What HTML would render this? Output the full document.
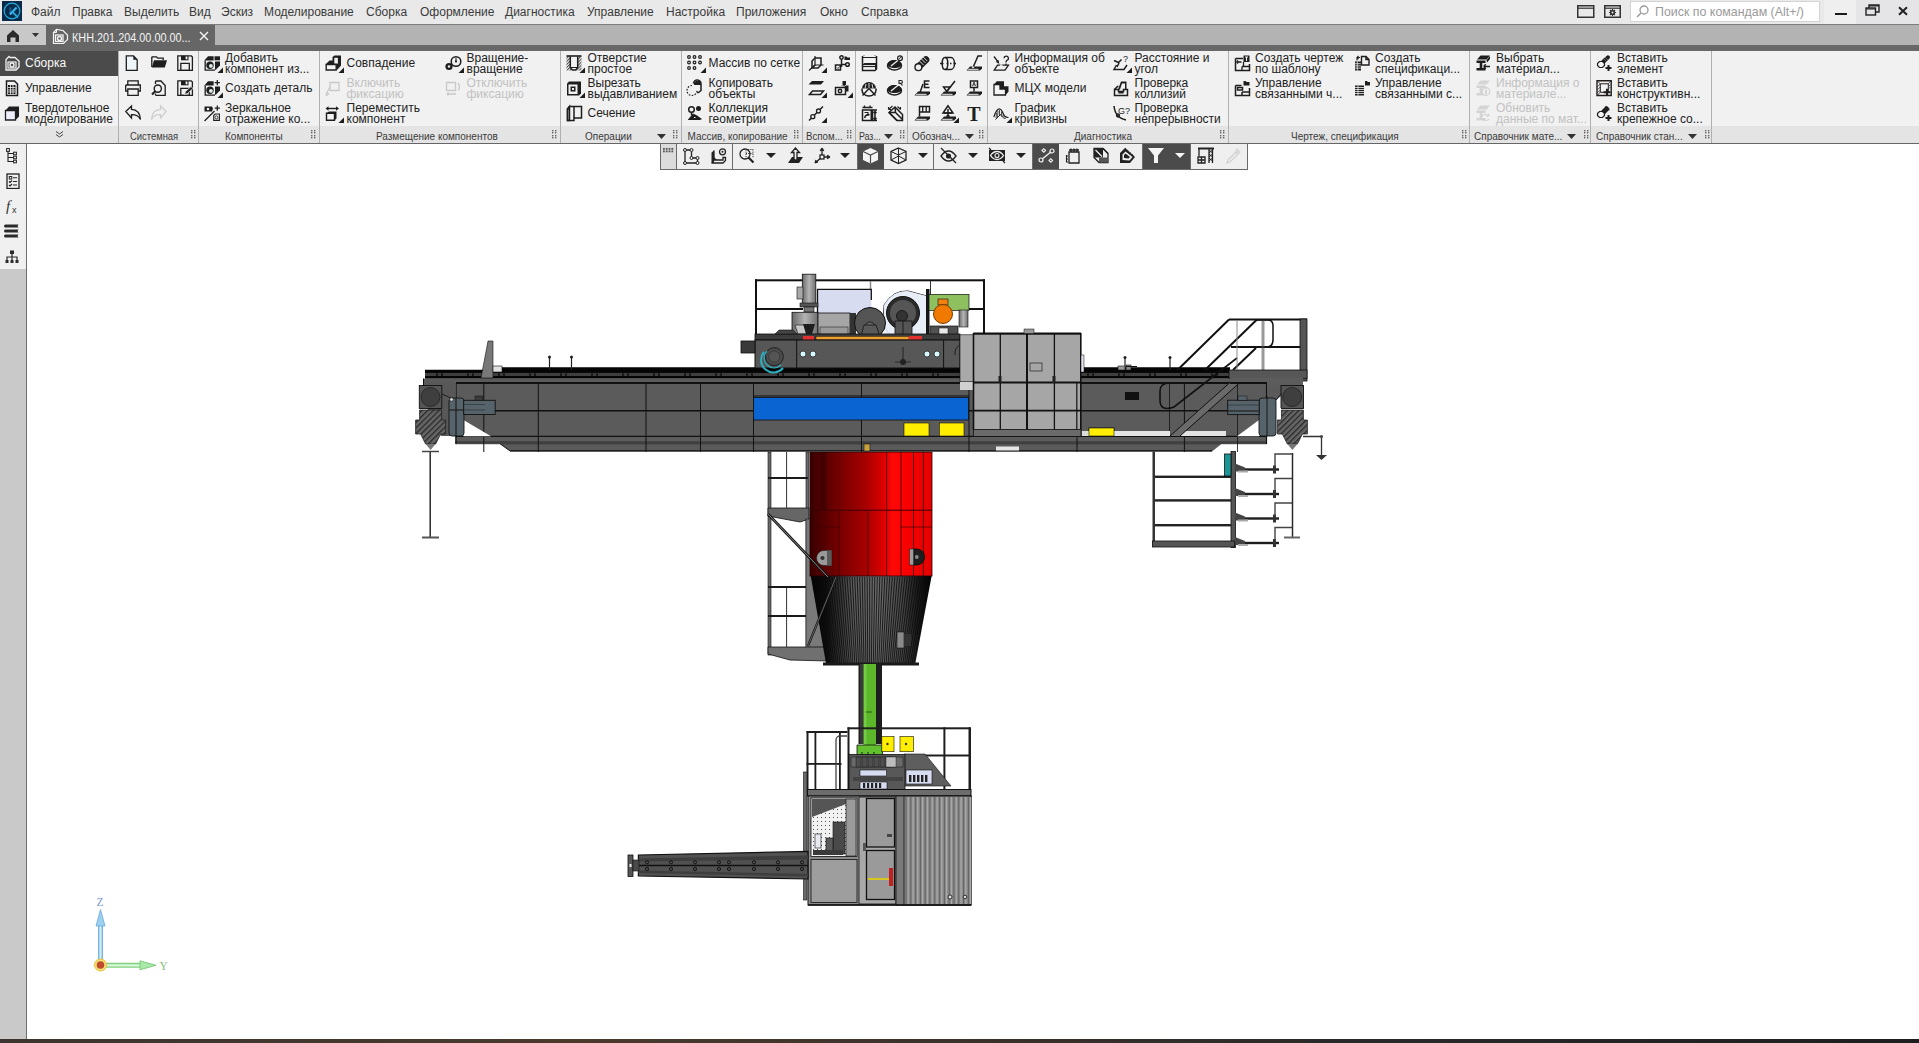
<!DOCTYPE html>
<html><head><meta charset="utf-8"><title>KOMPAS</title>
<style>
*{box-sizing:border-box}
html,body{margin:0;padding:0;width:1919px;height:1043px;overflow:hidden;background:#fff;font-family:"Liberation Sans",sans-serif}
#root{position:relative;width:1919px;height:1043px;overflow:hidden}
.a{position:absolute}
.t{position:absolute;white-space:nowrap;line-height:1}
#menubar{left:0;top:0;width:1919px;height:24px;background:#e9e9e9}
#menubar .m{position:absolute;top:5px;font-size:12px;color:#3a3a3a}
#tabstrip{left:0;top:24px;width:1919px;height:27px;background:#686868;border-top:1px solid #7c7c7c}
#ribbon{left:0;top:51px;width:1919px;height:93px;background:#f1f1f1;border-bottom:1px solid #666}
#labelrow{left:0;top:75px;width:1919px;height:17px;background:#e4e4e4}
.div{position:absolute;top:0;width:1px;height:92px;background:#b0b0b0}
.lbl{position:absolute;top:80.9px;font-size:10px;color:#3a3a3a;line-height:1;white-space:nowrap;transform-origin:0 0}
.it{position:absolute;font-size:12px;color:#222;line-height:11px;white-space:nowrap}
.dis{color:#c2c2c2}
#side{left:0;top:144px;width:26px;height:895px;background:#c9c9c9}
#sidetop{left:0;top:0;width:26px;height:125px;background:#f0f0f0}
#sideborder{left:26px;top:144px;width:1px;height:895px;background:#6e6e6e}
#taskbar{left:0;top:1039px;width:1919px;height:4px;background:linear-gradient(90deg,#3a3530,#4a3a2c 30%,#2a2a2a 70%,#1e1e1e)}

</style></head><body>
<div id="root">
<div id="menubar" class="a">
<svg class="a" style="left:2px;top:1px" width="21" height="20" viewBox="0 0 21 20"><rect x="0" y="0" width="20" height="20" fill="#0a2c4a"/><circle cx="10" cy="10" r="7.8" fill="none" stroke="#2aa8dc" stroke-width="1.2"/><path d="M8 4.8h6.5" stroke="#0a2c4a" stroke-width="1.5"/><path d="M8.3 6.5v7" stroke="#1c5a90" stroke-width="2"/><path d="M8 13.5L14.5 6.5" stroke="#36b8f0" stroke-width="2"/><path d="M10.5 11L16 16.5" stroke="#2aa8dc" stroke-width="1.8"/></svg>
<span class="m" style="left:31px">Файл</span>
<span class="m" style="left:72px">Правка</span>
<span class="m" style="left:124px">Выделить</span>
<span class="m" style="left:189px">Вид</span>
<span class="m" style="left:221px">Эскиз</span>
<span class="m" style="left:264px">Моделирование</span>
<span class="m" style="left:366px">Сборка</span>
<span class="m" style="left:420px">Оформление</span>
<span class="m" style="left:505px">Диагностика</span>
<span class="m" style="left:587px">Управление</span>
<span class="m" style="left:666px">Настройка</span>
<span class="m" style="left:736px">Приложения</span>
<span class="m" style="left:820px">Окно</span>
<span class="m" style="left:861px">Справка</span>
</div>
<div id="menuright">
<svg class="a" style="left:1577px;top:5px" width="18" height="13" viewBox="0 0 18 13"><rect x="0.75" y="0.75" width="16" height="11.5" fill="none" stroke="#333" stroke-width="1.5"/><path d="M1 3.2h16" stroke="#333" stroke-width="1.2"/></svg>
<svg class="a" style="left:1604px;top:5px" width="17" height="13" viewBox="0 0 17 13"><rect x="0.75" y="0.75" width="15.5" height="11.5" fill="none" stroke="#333" stroke-width="1.5"/><path d="M1 3.2h15" stroke="#333" stroke-width="1.2"/><circle cx="8.5" cy="7.5" r="2.6" fill="#333"/><path d="M8.5 4v7M5 7.5h7M6 5l5 5M11 5l-5 5" stroke="#333" stroke-width="1.2"/><circle cx="8.5" cy="7.5" r="1" fill="#e9e9e9"/></svg>
<div class="a" style="left:1630px;top:1px;width:190px;height:21px;background:#fff;border:1px solid #d4d4d4"></div>
<svg class="a" style="left:1636px;top:5px" width="13" height="13" viewBox="0 0 13 13"><circle cx="8" cy="5" r="4" fill="none" stroke="#9a9a9a" stroke-width="1.3"/><path d="M5 8L1 12" stroke="#9a9a9a" stroke-width="1.5"/></svg>
<span class="t" style="left:1655px;top:6px;font-size:12.4px;color:#9a9a9a">Поиск по командам (Alt+/)</span>
<div class="a" style="left:1824px;top:0;width:32px;height:24px;background:#efefef"></div>
<div class="a" style="left:1856px;top:0;width:63px;height:24px;background:#e5e5e8"></div>
<div class="a" style="left:1835px;top:12.8px;width:12px;height:1.8px;background:#1a1a1a"></div>
<svg class="a" style="left:1865px;top:4px" width="15" height="12" viewBox="0 0 15 12"><rect x="1" y="4" width="9.5" height="7" fill="none" stroke="#222" stroke-width="1.4"/><path d="M4 4V1h10v7h-3.5" fill="none" stroke="#222" stroke-width="1.4"/><path d="M1 5h9.5M4 1.8h10" stroke="#222" stroke-width="1.2"/></svg>
<svg class="a" style="left:1897px;top:6px" width="12" height="10" viewBox="0 0 12 10"><path d="M2 1.2l8 7.6M10 1.2L2 8.8" stroke="#222" stroke-width="2"/></svg>
</div>

<div id="tabstrip" class="a">
<div class="a" style="left:0;top:0;width:46px;height:20px;background:#c8c8c8"></div>
<svg class="a" style="left:6px;top:4px" width="14" height="13" viewBox="0 0 14 13"><path d="M1 13V6.5L7 1l6 5.5V13H9.5V8.5h-5V13z" fill="#2b2b2b"/></svg>
<svg class="a" style="left:32px;top:8px" width="7" height="4" viewBox="0 0 7 4"><path d="M0 0h7L3.5 4z" fill="#333"/></svg>
<div class="a" style="left:46px;top:0;width:169px;height:26px;background:#666"></div>
<svg class="a" style="left:52px;top:3px" width="17" height="17" viewBox="0 0 17 17"><path d="M4.5 1.5L1.5 4.5V15.5h10l4-4V7L11 2.5z" fill="none" stroke="#f4f4f4" stroke-width="1.2"/><path d="M4.5 1.5v3h-3" fill="none" stroke="#f4f4f4" stroke-width="1"/><rect x="3.5" y="7" width="7.5" height="6.5" fill="none" stroke="#f4f4f4" stroke-width="1.3"/><circle cx="7.5" cy="10.5" r="2" fill="none" stroke="#f4f4f4" stroke-width="1.5"/></svg>
<span class="t" style="left:72px;top:7px;font-size:12px;color:#f4f4f4;transform:scaleX(0.905);transform-origin:0 0">КНН.201.204.00.00.00...</span>
<svg class="a" style="left:199px;top:6px" width="10" height="10" viewBox="0 0 10 10"><path d="M1 1l8 8M9 1L1 9" stroke="#f4f4f4" stroke-width="1.4"/></svg>
<div class="a" style="left:215px;top:0;width:1704px;height:20px;background:#b3b3b3"></div>
</div>

<div id="ribbon" class="a">
<div class="a" style="left:0;top:75px;width:1919px;height:17px;background:#e4e4e4"></div>
<div class="a" style="left:0;top:0;width:118px;height:25px;background:#4b4b4b"></div>
<svg class="a" style="left:4px;top:4px;overflow:visible" width="16" height="16" viewBox="0 0 16 16"><path d="M5 1.5L2 4.5v10.5h10l3-3V6L11 2.5H6z" fill="none" stroke="#f2f2f2" stroke-width="1.3"/><rect x="4" y="7" width="8" height="6" fill="none" stroke="#f2f2f2" stroke-width="1.2"/><circle cx="8" cy="10" r="2" fill="none" stroke="#f2f2f2" stroke-width="1.4"/></svg>
<div class="it" style="left:25px;top:5.5px;line-height:12px;color:#fafafa">Сборка</div>
<svg class="a" style="left:5px;top:29px;overflow:visible" width="16" height="16" viewBox="0 0 16 16"><path d="M1.5 1h8l3 3v11.5h-11z" stroke="#1e1e1e" fill="none" stroke-width="1.5"/><path d="M3 5h7.5v9H3z" fill="#1e1e1e"/><path d="M3 7.5h7.5M3 10h7.5M3 12h7.5M5.5 5v9M8 5v9" stroke="#f0f0f0" stroke-width=".8"/></svg>
<div class="it" style="left:25px;top:30.5px;line-height:12px">Управление</div>
<svg class="a" style="left:4px;top:54px;overflow:visible" width="16" height="16" viewBox="0 0 16 16"><path d="M1.5 5.5h10v9.5h-10z" stroke="#222" fill="#eef" stroke-width="1.3"/><path d="M1.5 5.5l3.5-4h10v10l-3.5 3.5V5.5z" fill="#1e1e1e"/></svg>
<div class="it" style="left:25px;top:51.7px">Твердотельное<br>моделирование</div>
<svg class="a" style="left:55px;top:80px" width="9" height="7" viewBox="0 0 9 7"><path d="M1 .5l3.5 2.5L8 .5M1 3.5L4.5 6 8 3.5" stroke="#444" fill="none" stroke-width="1"/></svg>
<div class="div" style="left:118px"></div>
<div class="div" style="left:198px"></div>
<div class="div" style="left:319px"></div>
<div class="div" style="left:560px"></div>
<div class="div" style="left:681px"></div>
<div class="div" style="left:802px"></div>
<div class="div" style="left:855px"></div>
<div class="div" style="left:907px"></div>
<div class="div" style="left:987px"></div>
<div class="div" style="left:1228px"></div>
<div class="div" style="left:1469px"></div>
<div class="div" style="left:1590px"></div>
<div class="div" style="left:1711px"></div>
<svg class="a" style="left:125px;top:4px;overflow:visible" width="16" height="16" viewBox="0 0 16 16"><path d="M1.3 0.8h7.2l3.7 3.9v10.6H1.3z" stroke="#1e1e1e" fill="#eef6fa" stroke-width="1.3"/><path d="M8.3 0.8l3.9 3.9H8.3z" fill="#1e1e1e"/></svg>
<svg class="a" style="left:151px;top:4px;overflow:visible" width="16" height="16" viewBox="0 0 16 16"><path d="M0.8 1.8h4.7l1.2 1.3h5.5V5" stroke="#1e1e1e" fill="none" stroke-width="1.3"/><path d="M0.8 1.8V12" stroke="#1e1e1e" fill="none" stroke-width="1.3"/><path d="M3 5.2H16L13.8 12.5H0.8z" fill="#1e1e1e"/></svg>
<svg class="a" style="left:177px;top:4px;overflow:visible" width="16" height="16" viewBox="0 0 16 16"><path d="M0.8 0.8h13.4l1.2 1.2v13.3H0.8z" stroke="#1e1e1e" fill="none" stroke-width="1.3"/><path d="M4 0.8h7.5v4.5H4z" fill="#1e1e1e"/><rect x="8.6" y="1.5" width="1.8" height="2.8" fill="#f0f0f0"/><path d="M3.8 8.3h8.5v7H3.8z" stroke="#1e1e1e" fill="none" stroke-width="1.3"/></svg>
<svg class="a" style="left:125px;top:29px;overflow:visible" width="16" height="16" viewBox="0 0 16 16"><path d="M2.8 5V0.8h10.4V5" stroke="#1e1e1e" fill="none" stroke-width="1.3"/><path d="M0.7 5h14.6v6H13" stroke="#1e1e1e" fill="none" stroke-width="1.3"/><path d="M3 11H0.7V5" stroke="#1e1e1e" fill="none" stroke-width="1.3"/><path d="M2.8 9h10.4v6.3H2.8z" stroke="#1e1e1e" fill="none" stroke-width="1.3"/></svg>
<svg class="a" style="left:151px;top:29px;overflow:visible" width="16" height="16" viewBox="0 0 16 16"><path d="M4.5 1h5.5l4.2 4.5v9.8H4.5" stroke="#1e1e1e" fill="none" stroke-width="1.3"/><path d="M4.5 1v3M4.5 13.5v1.8" stroke="#1e1e1e" fill="none" stroke-width="1.3"/><circle cx="6.8" cy="8.6" r="3.6" stroke="#1e1e1e" fill="#f0f0f0" stroke-width="1.4"/><path d="M4.2 11.3L1 14.5" stroke="#1e1e1e" stroke-width="2"/></svg>
<svg class="a" style="left:177px;top:29px;overflow:visible" width="16" height="16" viewBox="0 0 16 16"><path d="M0.8 0.8h13.4l1.2 1.2v13.3H0.8z" stroke="#1e1e1e" fill="none" stroke-width="1.3"/><path d="M4 0.8h7.5v4.5H4z" fill="#1e1e1e"/><rect x="8.6" y="1.5" width="1.8" height="2.8" fill="#f0f0f0"/><path d="M3.8 8.3h8.5v7H3.8z" stroke="#1e1e1e" fill="none" stroke-width="1.3"/><path d="M7.5 14.5l1-3 5.5-5 2 2-5.5 5z" stroke="#f0f0f0" stroke-width="0.8" fill="#1e1e1e"/></svg>
<svg class="a" style="left:125px;top:54px;overflow:visible" width="16" height="16" viewBox="0 0 16 16"><path d="M0.8 6.5L6.5 1v3.3c5 0.2 8.5 3 9 10.2C14 11 11 9.7 6.5 9.7V13z" stroke="#1e1e1e" fill="none" stroke-width="1.3" stroke-linejoin="miter"/></svg>
<svg class="a" style="left:151px;top:54px;overflow:visible" width="16" height="16" viewBox="0 0 16 16"><path d="M15.2 6.5L9.5 1v3.3c-5 0.2-8.5 3-9 10.2C2 11 5 9.7 9.5 9.7V13z" stroke="#cdcdcd" fill="none" stroke-width="1.2"/></svg>
<svg class="a" style="left:204px;top:4px;overflow:visible" width="16" height="16" viewBox="0 0 16 16"><path d="M1.2 5.5V15.2H11" stroke="#1e1e1e" fill="none" stroke-width="1.3"/><path d="M0.3 5.5L4 1.3H9.6V5.5z" fill="#1e1e1e"/><path d="M10.5 1.3H16V5.3H10.5z" fill="#1e1e1e"/><path d="M11 6.5H16V10.5L11.8 14.8H11z" fill="#1e1e1e"/><circle cx="6" cy="10.2" r="3.7" fill="#1e1e1e"/><circle cx="6.9" cy="10.9" r="1.9" fill="#e6eeee"/><path d="M19 12.5V18h-5.5z" fill="#1e1e1e"/></svg>
<div class="it" style="left:225px;top:1.7px">Добавить<br>компонент из...</div>
<svg class="a" style="left:204px;top:29px;overflow:visible" width="16" height="16" viewBox="0 0 16 16"><path d="M1.2 5.5V15.2H11" stroke="#1e1e1e" fill="none" stroke-width="1.3"/><path d="M0.3 5.5L4 1.3H9.6V5.5z" fill="#1e1e1e"/><path d="M13.3 0v5.2M10.7 2.6h5.2" stroke="#1e1e1e" stroke-width="1.3"/><path d="M11 6.5H16V10.5L11.8 14.8H11z" fill="#1e1e1e"/><circle cx="6" cy="10.2" r="3.7" fill="#1e1e1e"/><circle cx="6.9" cy="10.9" r="1.9" fill="#e6eeee"/><path d="M19 12.5V18h-5.5z" fill="#1e1e1e"/></svg>
<div class="it" style="left:225px;top:30.5px;line-height:12px">Создать деталь</div>
<svg class="a" style="left:204px;top:54px;overflow:visible" width="16" height="16" viewBox="0 0 16 16"><path d="M0.5 1.5H8L9 3.5 8 6.5H0.5z" fill="#1e1e1e"/><circle cx="4" cy="4" r="1.3" fill="#f0f0f0"/><path d="M0.5 16L10.5 6" stroke="#1e1e1e" stroke-width="1.2"/><path d="M13.3 0.5v5.2M10.7 3.1h5.2" stroke="#1e1e1e" stroke-width="1.3"/><path d="M9.7 10.5l1.5-1.5H15.4v6.4H9.7z" stroke="#1e1e1e" fill="#f4f4f4" stroke-width="1.1"/><circle cx="12.5" cy="12.4" r="1.5" stroke="#1e1e1e" fill="none" stroke-width="0.9"/></svg>
<div class="it" style="left:225px;top:51.7px">Зеркальное<br>отражение ко...</div>
<svg class="a" style="left:325px;top:4px;overflow:visible" width="16" height="16" viewBox="0 0 16 16"><path d="M0.5 9.5L4.5 5.5H7.5V2L9.5 0.5H16V10.5L12.5 14.5H11V9.5z" fill="#1e1e1e"/><rect x="9.3" y="2.8" width="3.6" height="5.8" fill="#eef0f0"/><path d="M1.2 9.5H11.2V15H1.2z" stroke="#1e1e1e" fill="#f4f4f4" stroke-width="1.4"/><path d="M19 12.5V18h-5.5z" fill="#1e1e1e"/></svg>
<div class="it" style="left:346.5px;top:5.5px;line-height:12px">Совпадение</div>
<svg class="a" style="left:325px;top:29px;overflow:visible" width="16" height="16" viewBox="0 0 16 16"><path d="M5 2.5h9v8H5z" stroke="#c9c9c9" fill="none" stroke-width="1.3"/><path d="M5 7L1 14M3 15h-2.5M2 12.5l2 2" stroke="#c9c9c9" stroke-width="1.3" fill="none"/></svg>
<div class="it dis" style="left:346.5px;top:26.7px">Включить<br>фиксацию</div>
<svg class="a" style="left:325px;top:54px;overflow:visible" width="16" height="16" viewBox="0 0 16 16"><path d="M2.5 3.5H12" stroke="#1e1e1e" stroke-width="1.4"/><path d="M0.5 3.5L3.5 1.2V5.8z" fill="#1e1e1e"/><path d="M14 3.5L11 1.2V5.8z" fill="#1e1e1e"/><path d="M1.5 8.2h8v7h-8z" stroke="#1e1e1e" fill="#f4f4f4" stroke-width="1.4"/><path d="M2 8L4 6.5H11.5V13.5L9.8 15V8.2z" fill="#1e1e1e"/><path d="M19 12.5V18h-5.5z" fill="#1e1e1e"/></svg>
<div class="it" style="left:346.5px;top:51.7px">Переместить<br>компонент</div>
<svg class="a" style="left:445px;top:4px;overflow:visible" width="16" height="16" viewBox="0 0 16 16"><circle cx="11" cy="6.5" r="4.8" stroke="#1e1e1e" fill="none" stroke-width="1.5"/><circle cx="11" cy="6.5" r="1.1" fill="#1e1e1e"/><path d="M11 3v3" stroke="#222" stroke-width="1.1"/><circle cx="4" cy="11.5" r="3.6" fill="#1e1e1e"/><circle cx="4" cy="11.5" r="1.2" fill="#f0f0f0"/><path d="M19 12.5V18h-5.5z" fill="#1e1e1e"/></svg>
<div class="it" style="left:466.5px;top:1.7px">Вращение-<br>вращение</div>
<svg class="a" style="left:445px;top:29px;overflow:visible" width="16" height="16" viewBox="0 0 16 16"><path d="M1.5 2.5h9v8h-9z" stroke="#c9c9c9" fill="none" stroke-width="1.3"/><path d="M13 3c2 2 2 5.5 0 7.5M2 14h9M2 14l1.5-1.5M2 14l1.5 1.5" stroke="#c9c9c9" stroke-width="1.3" fill="none"/></svg>
<div class="it dis" style="left:466.5px;top:26.7px">Отключить<br>фиксацию</div>
<svg class="a" style="left:566px;top:4px;overflow:visible" width="16" height="16" viewBox="0 0 16 16"><defs><pattern id="hh" width="2.2" height="2.2" patternUnits="userSpaceOnUse" patternTransform="rotate(45)"><rect width="2.2" height="2.2" fill="#f0f0f0"/><rect width="1" height="2.2" fill="#444"/></pattern></defs><path d="M0.5 1.5H4V13l2 2.5H0.5zM15.5 1.5H12V13l-2 2.5h5.5z" fill="url(#hh)"/><path d="M0.5 1H15.5" stroke="#1e1e1e" stroke-width="1.6"/><path d="M4.3 1.5V12.5L6.3 15H9.7L11.7 12.5V1.5" stroke="#1e1e1e" fill="none" stroke-width="1.5"/><path d="M4.5 12.5H11.5" stroke="#1e1e1e" stroke-width="1"/><path d="M19 12.5V18h-5.5z" fill="#1e1e1e"/></svg>
<div class="it" style="left:587.5px;top:1.7px">Отверстие<br>простое</div>
<svg class="a" style="left:566px;top:29px;overflow:visible" width="16" height="16" viewBox="0 0 16 16"><path d="M1 3.5l2-2h12v12l-2 2H1z" fill="#1e1e1e"/><path d="M2.5 4.5h9v9.5h-9z" fill="#f0f0f0"/><path d="M4.5 6.5h5v5h-5z" fill="#1e1e1e"/><path d="M6 8h2v2H6z" fill="#f0f0f0"/><path d="M19 12.5V18h-5.5z" fill="#1e1e1e"/></svg>
<div class="it" style="left:587.5px;top:26.7px">Вырезать<br>выдавливанием</div>
<svg class="a" style="left:566px;top:54px;overflow:visible" width="16" height="16" viewBox="0 0 16 16"><path d="M1.5 4l2-2.5v14H1.5z" stroke="#1e1e1e" fill="none" stroke-width="1.5"/><path d="M3.5 1.5h12v11.5H8v2.5H1.5V4h2" stroke="#1e1e1e" fill="none" stroke-width="1.5"/><path d="M8 1.5V13" stroke="#1e1e1e" fill="none" stroke-width="1.5"/><path d="M3.5 1.5L1.5 4" stroke="#1e1e1e" fill="none" stroke-width="1.5"/></svg>
<div class="it" style="left:587.5px;top:55.5px;line-height:12px">Сечение</div>
<svg class="a" style="left:687px;top:4px;overflow:visible" width="16" height="16" viewBox="0 0 16 16"><circle cx="2.0" cy="2.0" r="1.35" stroke="#1e1e1e" fill="none" stroke-width="1.2"/><circle cx="2.0" cy="7.5" r="1.35" stroke="#1e1e1e" fill="none" stroke-width="1.2"/><circle cx="2.0" cy="13.0" r="1.35" stroke="#1e1e1e" fill="none" stroke-width="1.2"/><circle cx="7.5" cy="2.0" r="1.35" stroke="#1e1e1e" fill="none" stroke-width="1.2"/><circle cx="7.5" cy="7.5" r="1.35" stroke="#1e1e1e" fill="none" stroke-width="1.2"/><circle cx="7.5" cy="13.0" r="1.35" stroke="#1e1e1e" fill="none" stroke-width="1.2"/><circle cx="13.0" cy="2.0" r="1.35" stroke="#1e1e1e" fill="none" stroke-width="1.2"/><circle cx="13.0" cy="7.5" r="1.35" stroke="#1e1e1e" fill="none" stroke-width="1.2"/><path d="M19 12.5V18h-5.5z" fill="#1e1e1e"/></svg>
<div class="it" style="left:708.5px;top:5.5px;line-height:12px">Массив по сетке</div>
<svg class="a" style="left:687px;top:29px;overflow:visible" width="16" height="16" viewBox="0 0 16 16"><path d="M6.5 3.5A3.5 3.5 0 0 1 14 4v6.5l-2.5 2H10" stroke="#1e1e1e" fill="none" stroke-width="1.5"/><path d="M7 2.5l2-1.5h5v4H7z" fill="#1e1e1e"/><path d="M5 5.5a5 5 0 1 0 5 5" stroke="#222" fill="none" stroke-width="1.2" stroke-dasharray="1.6 1.4"/></svg>
<div class="it" style="left:708.5px;top:26.7px">Копировать<br>объекты</div>
<svg class="a" style="left:687px;top:54px;overflow:visible" width="16" height="16" viewBox="0 0 16 16"><circle cx="4.5" cy="4.5" r="2.8" stroke="#1e1e1e" fill="none" stroke-width="1.5"/><path d="M4.5 7.3v3" stroke="#1e1e1e" fill="none" stroke-width="1.5"/><circle cx="11.5" cy="3.5" r="2.5" fill="#1e1e1e"/><path d="M1 14.5l5-6 4 2 5 3.5-2 1H1z" fill="#1e1e1e"/><path d="M7 12.5h1.5" stroke="#f0f0f0" stroke-width="1"/></svg>
<div class="it" style="left:708.5px;top:51.7px">Коллекция<br>геометрии</div>
<svg class="a" style="left:993px;top:4px;overflow:visible" width="16" height="16" viewBox="0 0 16 16"><path d="M1 1.5L5.5 7.5" stroke="#1e1e1e" stroke-width="1.3"/><path d="M6.3 9L2.8 6.8 5.5 5z" fill="#1e1e1e"/><path d="M4.5 10.2H15.5L12 15.2H1.2z" stroke="#1e1e1e" fill="none" stroke-width="1.3"/><path d="M11 3.2a2.2 2.2 0 1 1 2.8 2.2c-.8.3-.8 1-.8 2" stroke="#1e1e1e" fill="none" stroke-width="1.3"/><rect x="12.3" y="8.6" width="1.4" height="1.4" fill="#1e1e1e"/><path d="M7 10.2h2.5" stroke="#f0f0f0" stroke-width="1.4"/></svg>
<div class="it" style="left:1014.5px;top:1.7px">Информация об<br>объекте</div>
<svg class="a" style="left:993px;top:29px;overflow:visible" width="16" height="16" viewBox="0 0 16 16"><path d="M1 4.5L3.8 1.2H11V6.2H15.5V11.8L12.5 15V9H7V4.5z" fill="#1e1e1e"/><path d="M1 4.5H7V9.2H12.5V15H1z" stroke="#1e1e1e" fill="#f4f6f6" stroke-width="1.3"/></svg>
<div class="it" style="left:1014.5px;top:30.5px;line-height:12px">МЦХ модели</div>
<svg class="a" style="left:993px;top:54px;overflow:visible" width="16" height="16" viewBox="0 0 16 16"><path d="M0.8 12C2.5 7 4.5 3.5 7 4c2 .4 3 5 4.5 7 1 1.2 2.5 1.5 4 1.5" stroke="#1e1e1e" fill="none" stroke-width="1.2"/><path d="M2.5 14.5C4.5 12.5 6 11 7.5 9.5c1 2 2.5 3.5 5 4" stroke="#1e1e1e" fill="none" stroke-width="1"/><path d="M3.5 8l-.5 5M5 6l-.5 6M6.5 5v5M8.5 6.5v4M10 9.5v2.5" stroke="#1e1e1e" stroke-width=".8"/><path d="M19 12.5V18h-5.5z" fill="#1e1e1e"/></svg>
<div class="it" style="left:1014.5px;top:51.7px">График<br>кривизны</div>
<svg class="a" style="left:1113px;top:4px;overflow:visible" width="16" height="16" viewBox="0 0 16 16"><path d="M3.5 10L1 14.5h10l3-4.5" stroke="#1e1e1e" fill="none" stroke-width="1.5"/><path d="M1 5.5l4.5 2 3-3" stroke="#1e1e1e" fill="none" stroke-width="1.5"/><path d="M6 8l-2 4" stroke="#1e1e1e" fill="none" stroke-width="1.5"/><text x="12.5" y="7" text-anchor="middle" font-family="Liberation Sans" font-size="9" fill="#222">?</text><path d="M19 12.5V18h-5.5z" fill="#1e1e1e"/></svg>
<div class="it" style="left:1134.5px;top:1.7px">Расстояние и<br>угол</div>
<svg class="a" style="left:1113px;top:29px;overflow:visible" width="16" height="16" viewBox="0 0 16 16"><path d="M1.5 9.5h4v2h5v-2h4v6h-13z" stroke="#1e1e1e" fill="none" stroke-width="1.5"/><path d="M5 9.5L8 1.5h5.5v8H12V3.5H9L7 9.5z" fill="#1e1e1e"/><path d="M1.5 9.5l3-3h1" stroke="#1e1e1e" fill="none" stroke-width="1.5"/><path d="M5.5 11.5h5v2h-5z" fill="#1e1e1e"/></svg>
<div class="it" style="left:1134.5px;top:26.7px">Проверка<br>коллизий</div>
<svg class="a" style="left:1113px;top:54px;overflow:visible" width="16" height="16" viewBox="0 0 16 16"><path d="M1 1c1 8 4 12 12 14" stroke="#1e1e1e" fill="none" stroke-width="1.5"/><circle cx="5" cy="10.5" r="1.4" stroke="#1e1e1e" fill="none" stroke-width="1.5"/><text x="5" y="9" font-family="Liberation Sans" font-size="9" fill="#222">G?</text></svg>
<div class="it" style="left:1134.5px;top:51.7px">Проверка<br>непрерывности</div>
<svg class="a" style="left:1234px;top:4px;overflow:visible" width="16" height="16" viewBox="0 0 16 16"><path d="M1.5 3.5h7.5M1.5 3.5v12h14V9" stroke="#1e1e1e" fill="none" stroke-width="1.5"/><path d="M9.5 0.5h6v6.5h-6z" fill="#1e1e1e"/><path d="M11 2h3M12.5 2V6" stroke="#f0f0f0" stroke-width="1.1"/><path d="M8 11.5h7.5M8 11.5v4M9.5 7v4.5M2.5 7h5M2.5 7l1.5-1.5M2.5 7l1.5 1.5" stroke="#1e1e1e" stroke-width="1.3" fill="none"/></svg>
<div class="it" style="left:1255px;top:1.7px">Создать чертеж<br>по шаблону</div>
<svg class="a" style="left:1234px;top:29px;overflow:visible" width="16" height="16" viewBox="0 0 16 16"><path d="M1.5 5.5h6M1.5 5.5v10h14V8M8 12h7.5M8 12v3.5" stroke="#1e1e1e" fill="none" stroke-width="1.5"/><path d="M3.5 7.5h5v2.5h-5z" stroke="#1e1e1e" fill="none" stroke-width="1.5"/><path d="M9.5 1h2l1 1h3v3.5h-6z" fill="#1e1e1e"/></svg>
<div class="it" style="left:1255px;top:26.7px">Управление<br>связанными ч...</div>
<svg class="a" style="left:1354px;top:4px;overflow:visible" width="16" height="16" viewBox="0 0 16 16"><path d="M1 6.5h6v9H1z" fill="#1e1e1e"/><path d="M1 8.7h6M1 10.9h6M1 13.1h6M3.3 6.5v9" stroke="#f0f0f0" stroke-width=".8"/><path d="M7.5 1.5h4.5l3 3v5.5H7.5z" stroke="#1e1e1e" fill="#f0f0f0" stroke-width="1.4"/><path d="M12 1.5v3h3" stroke="#1e1e1e" fill="none" stroke-width="1.5"/><path d="M3 5.5V2.5h3M4.5 1l-1.5 1.5 1.5 1.5" stroke="#1e1e1e" stroke-width="1.1" fill="none"/></svg>
<div class="it" style="left:1375px;top:1.7px">Создать<br>спецификаци...</div>
<svg class="a" style="left:1354px;top:29px;overflow:visible" width="16" height="16" viewBox="0 0 16 16"><path d="M1 5.5h9v10H1z" fill="#1e1e1e"/><path d="M1 7.5h9M1 9.5h9M1 11.5h9M1 13.5h9M4 5.5v10" stroke="#f0f0f0" stroke-width=".8"/><path d="M11 1h2l.8 1H16v3.5h-5z" fill="#1e1e1e"/></svg>
<div class="it" style="left:1375px;top:26.7px">Управление<br>связанными с...</div>
<svg class="a" style="left:1474px;top:4px;overflow:visible" width="16" height="16" viewBox="0 0 16 16"><path d="M3 4.5L6.5 0.5H16L12.5 4.5z" fill="#1e1e1e"/><path d="M2.5 5.5h9v2.5H8.3v5h3.2v2.5h-9V13h3.2V8H2.5z" fill="#1e1e1e"/><path d="M12.5 5L16 1v3l-3 3.5" fill="#1e1e1e"/><path d="M9.5 11.5h6.5M9.5 11.5l2.3-2.2M9.5 11.5l2.3 2.2" stroke="#1e1e1e" stroke-width="1.4" fill="none"/></svg>
<div class="it" style="left:1496px;top:1.7px">Выбрать<br>материал...</div>
<svg class="a" style="left:1474px;top:29px;overflow:visible" width="16" height="16" viewBox="0 0 16 16"><path d="M3 4.5L6.5 0.5H16L12.5 4.5z" fill="#d4d4d4"/><path d="M2.5 5.5h9v2.5H8.3v5h3.2v2.5h-9V13h3.2V8H2.5z" fill="#d4d4d4"/><circle cx="12" cy="11.5" r="3.8" stroke="#d0d0d0" fill="#f0f0f0" stroke-width="1.2"/><path d="M12 10v4M12 8.6v.6" stroke="#c8c8c8" stroke-width="1.3"/></svg>
<div class="it dis" style="left:1496px;top:26.7px">Информация о<br>материале...</div>
<svg class="a" style="left:1474px;top:54px;overflow:visible" width="16" height="16" viewBox="0 0 16 16"><path d="M3 4.5L6.5 0.5H16L12.5 4.5z" fill="#d4d4d4"/><path d="M2.5 5.5h9v2.5H8.3v5h3.2v2.5h-9V13h3.2V8H2.5z" fill="#d4d4d4"/><path d="M8 11c1.5-2 5-2 6.5 0M14.5 11l.5-2M14.5 11l-2 0M15 14c-1.5 2-5 2-6.5 0" stroke="#cfcfcf" fill="none" stroke-width="1.2"/></svg>
<div class="it dis" style="left:1496px;top:51.7px">Обновить<br>данные по мат...</div>
<svg class="a" style="left:1596px;top:4px;overflow:visible" width="16" height="16" viewBox="0 0 16 16"><path d="M4.5 6.5L10.5 1a1.8 1.8 0 0 1 3 2.5L7.5 9.5" fill="#1e1e1e"/><path d="M7.5 3.5l3 3M9 2l3 3" stroke="#8a8a8a" stroke-width=".7"/><path d="M1.5 8.5L3.5 6.5H6.5L8.5 8.5V10.5L6.5 12.5H3.5L1.5 10.5z" stroke="#1e1e1e" fill="#f4f4f4" stroke-width="1.2"/><path d="M12.5 10v6M9.5 13h6" stroke="#1e1e1e" stroke-width="2"/></svg>
<div class="it" style="left:1617px;top:1.7px">Вставить<br>элемент</div>
<svg class="a" style="left:1596px;top:29px;overflow:visible" width="16" height="16" viewBox="0 0 16 16"><path d="M1 0.8h14.2v14.7H1z" stroke="#1e1e1e" fill="#f6f0f0" stroke-width="1.4"/><path d="M4.3 3.8h8v8.5h-8z" stroke="#1e1e1e" fill="#f4f4f8" stroke-width="1"/><path d="M1.5 1.3L4.3 3.8M14.7 1.3L12.3 3.8M1.5 15L4.3 12.3M1.8 6.5l2.5-2.5M1.8 9.5l2.5-2.5M1.8 12.5l2.5-2.5M13 6l1.5-1.5M13 8.5l1.5-1.5" stroke="#1e1e1e" stroke-width=".8"/><path d="M11 8.8v7M7.5 12.3h7" stroke="#1e1e1e" stroke-width="2.1"/></svg>
<div class="it" style="left:1617px;top:26.7px">Вставить<br>конструктивн...</div>
<svg class="a" style="left:1596px;top:54px;overflow:visible" width="16" height="16" viewBox="0 0 16 16"><path d="M4.5 6.5L8.5 2.5a2.5 2.5 0 0 1 4 3L8 10" fill="#1e1e1e"/><path d="M9 2a3 3 0 0 1 4 3.5" stroke="#1e1e1e" fill="none" stroke-width="1"/><path d="M1.5 8.5L3.5 6.5H6.5L8.5 8.5V10.5L6.5 12.5H3.5L1.5 10.5z" stroke="#1e1e1e" fill="#f4f4f4" stroke-width="1.2"/><path d="M12.5 10v6M9.5 13h6" stroke="#1e1e1e" stroke-width="2"/></svg>
<div class="it" style="left:1617px;top:51.7px">Вставить<br>крепежное со...</div>
<svg class="a" style="left:808px;top:4px;overflow:visible" width="16" height="16" viewBox="0 0 16 16"><path d="M7 1v10M7 10h8.5M7 10L1 15.5" stroke="#1e1e1e" stroke-width="1.2" fill="none"/><path d="M7 3h6v7" stroke="#1e1e1e" fill="none" stroke-width="1.5"/><path d="M7 10L4 13H10l3-3M4 13V6l3-3" stroke="#1e1e1e" fill="none" stroke-width="1.5"/><path d="M19 12.5V18h-5.5z" fill="#1e1e1e"/></svg>
<svg class="a" style="left:834px;top:4px;overflow:visible" width="16" height="16" viewBox="0 0 16 16"><circle cx="7.5" cy="2.5" r="1.7" stroke="#1e1e1e" fill="none" stroke-width="1.5"/><path d="M7.5 4.2V12M7.5 9.5h4.5" stroke="#1e1e1e" fill="none" stroke-width="1.5"/><circle cx="13.5" cy="9.5" r="1.8" stroke="#1e1e1e" fill="none" stroke-width="1.5"/><path d="M10.5 1.5h2l.8 1H16V5h-5.5z" fill="#1e1e1e"/><rect x="1.5" y="10" width="5" height="5" stroke="#1e1e1e" fill="none" stroke-width="1.5"/><path d="M3 12.5l1 1 1.5-2" stroke="#1e1e1e" stroke-width=".9" fill="none"/></svg>
<svg class="a" style="left:808px;top:29px;overflow:visible" width="16" height="16" viewBox="0 0 16 16"><path d="M4 1h12l-3 3.5H0.5z" fill="#1e1e1e"/><path d="M4.5 11h11l-3 3.5H1.5z" stroke="#1e1e1e" fill="none" stroke-width="1.5"/><path d="M19 12.5V18h-5.5z" fill="#1e1e1e"/></svg>
<svg class="a" style="left:834px;top:29px;overflow:visible" width="16" height="16" viewBox="0 0 16 16"><path d="M1.5 7.5h10v7h-10z" stroke="#1e1e1e" fill="none" stroke-width="1.5"/><circle cx="6" cy="11" r="1.7" stroke="#1e1e1e" fill="none" stroke-width="1.5"/><path d="M8.5 1h3.5v3.5L10.2 6.5 8.5 4.5z" fill="#1e1e1e"/><path d="M7 5.5h1.5l1.7 2 1.8-2h2.5v6h-3V7.5" fill="#1e1e1e"/><path d="M19 12.5V18h-5.5z" fill="#1e1e1e"/></svg>
<svg class="a" style="left:808px;top:54px;overflow:visible" width="16" height="16" viewBox="0 0 16 16"><path d="M1 15.5L15 1.5" stroke="#1e1e1e" fill="none" stroke-width="1.5"/><circle cx="4.8" cy="11.7" r="2" fill="#f0f0f0" stroke="#1e1e1e" stroke-width="1.3"/><circle cx="10.5" cy="6" r="2" fill="#f0f0f0" stroke="#1e1e1e" stroke-width="1.3"/><path d="M19 12.5V18h-5.5z" fill="#1e1e1e"/></svg>
<svg class="a" style="left:861px;top:4px;overflow:visible" width="16" height="16" viewBox="0 0 16 16"><path d="M1.5 1v14.5h12.5l1.5-1.5V1" stroke="#1e1e1e" fill="none" stroke-width="1.5"/><path d="M1.5 2.5h14M3 1V.5M14 1V.5" stroke="#1e1e1e" stroke-width="1.2"/><path d="M1.5 9.5L3.5 8h12v5.5l-1.5 1.5V10H1.5z" fill="#1e1e1e"/><path d="M1.5 11.5H14" stroke="#1e1e1e" stroke-width="1.2"/></svg>
<svg class="a" style="left:887px;top:4px;overflow:visible" width="16" height="16" viewBox="0 0 16 16"><ellipse cx="7.5" cy="10.5" rx="7" ry="4.5" stroke="#1e1e1e" fill="none" stroke-width="1.5"/><path d="M0.5 9.5c0-2.5 3-4.5 7-4.5s7 2 7 4.5c0 2-3 3.5-7 3.5s-7-1.5-7-3.5z" fill="#1e1e1e"/><path d="M4 11L12 4.5" stroke="#f0f0f0" stroke-width="1.3"/><circle cx="13" cy="3.2" r="2.4" stroke="#1e1e1e" fill="#f0f0f0" stroke-width="1.2"/><path d="M11.7 4.5l2.6-2.6" stroke="#1e1e1e" stroke-width="1"/></svg>
<svg class="a" style="left:861px;top:29px;overflow:visible" width="16" height="16" viewBox="0 0 16 16"><path d="M1 8.5a7 6.5 0 0 1 14 0z" fill="#1e1e1e"/><path d="M4 8.5L5 4M8 8.5V3M12 8.5L11 4" stroke="#f0f0f0" stroke-width="0.9"/><path d="M1 8.5v1.5a7 6 0 0 0 14 0V8.5" stroke="#1e1e1e" fill="none" stroke-width="1.5"/><path d="M1.5 15.5L8 8.5l6.5 7" stroke="#1e1e1e" fill="none" stroke-width="1.5"/></svg>
<svg class="a" style="left:887px;top:29px;overflow:visible" width="16" height="16" viewBox="0 0 16 16"><ellipse cx="7.5" cy="10.5" rx="7" ry="4.5" stroke="#1e1e1e" fill="none" stroke-width="1.5"/><path d="M0.5 9.5c0-2.5 3-4.5 7-4.5s7 2 7 4.5c0 2-3 3.5-7 3.5s-7-1.5-7-3.5z" fill="#1e1e1e"/><path d="M4 11L12 4.5" stroke="#f0f0f0" stroke-width="1.3"/><path d="M12 4V0.5h2a1.4 1.4 0 0 1 0 2.8h-2M13.5 3.3L15.5 5.5" stroke="#1e1e1e" stroke-width="1.1" fill="none"/></svg>
<svg class="a" style="left:861px;top:54px;overflow:visible" width="16" height="16" viewBox="0 0 16 16"><path d="M1.5 5h10v10.5h-10z" stroke="#1e1e1e" fill="none" stroke-width="1.5"/><path d="M1.5 2.5h10M3.5 0.5v2M9 0.5v2" stroke="#1e1e1e" stroke-width="1.3"/><path d="M9.5 5h2v10.5h-2z" fill="#1e1e1e"/><path d="M14 6.5v8M12.5 8l1.5-1.5 1.5 1.5M12.5 13l1.5 1.5 1.5-1.5M12 15.5h4M12 5h4" stroke="#1e1e1e" fill="none" stroke-width="1.5"/><path d="M3.5 13c1-3 3-4 5-3" stroke="#1e1e1e" fill="none" stroke-width="1.5"/><path d="M3.5 7.5h3.5v3.5" stroke="#1e1e1e" stroke-width="1.1" fill="none"/></svg>
<svg class="a" style="left:887px;top:54px;overflow:visible" width="16" height="16" viewBox="0 0 16 16"><path d="M8 2l7.5 7.5v6H10L2 7.5z" stroke="#1e1e1e" fill="none" stroke-width="1.5"/><path d="M2 7.5h6.5l7 7M8.5 7.5L8 2" stroke="#1e1e1e" fill="none" stroke-width="1.5"/><path d="M5.5 1L1.5 4.5M1.5 4.5h2.5M1.5 4.5V2M10.5 1.5l3 3M13.5 4.5V2" stroke="#1e1e1e" stroke-width="1.1" fill="none"/><path d="M2 7.5l8 8" stroke="#1e1e1e" stroke-width="1.6"/></svg>
<svg class="a" style="left:914px;top:4px;overflow:visible" width="16" height="16" viewBox="0 0 16 16"><path d="M1.8 9.8L9.8 1.8a3.6 3.6 0 0 1 5 5L6.5 14.8z" fill="#1e1e1e"/><path d="M5 5.5l4.5 4.5M7 3.5l4.5 4.5M9 1.8l4.3 4.3" stroke="#f0f0f0" stroke-width="0.9"/><circle cx="4.4" cy="12.2" r="3.4" fill="#f0f0f0" stroke="#1e1e1e" stroke-width="1.4"/></svg>
<svg class="a" style="left:940px;top:4px;overflow:visible" width="16" height="16" viewBox="0 0 16 16"><path d="M5 2.5h6a3.5 6 0 0 1 0 12H5" stroke="#1e1e1e" fill="none" stroke-width="1.5"/><ellipse cx="5" cy="8.5" rx="2.8" ry="6" stroke="#1e1e1e" fill="none" stroke-width="1.5"/><path d="M0 8.5h3.5M6.5 8.5h1.5M10 8.5h1.5M13.5 8.5h2.5" stroke="#1e1e1e" stroke-width="1.3"/></svg>
<svg class="a" style="left:966px;top:4px;overflow:visible" width="16" height="16" viewBox="0 0 16 16"><path d="M0.5 15.5L4 11.5H16V13.5L14 15.5Z" fill="#1e1e1e"/><path d="M2.2 14.3H12.5" stroke="#f0f0f0" stroke-width="1"/><path d="M7 12.5L12 1H16" stroke="#1e1e1e" fill="none" stroke-width="1.5"/><circle cx="7" cy="12.3" r="1" fill="#f0f0f0"/></svg>
<svg class="a" style="left:914px;top:29px;overflow:visible" width="16" height="16" viewBox="0 0 16 16"><path d="M0.5 15.5L4 11.5H16V13.5L14 15.5Z" fill="#1e1e1e"/><path d="M2.2 14.3H12.5" stroke="#f0f0f0" stroke-width="1"/><path d="M6 12.5L9 4" stroke="#1e1e1e" fill="none" stroke-width="1.5"/><path d="M15.5 1H10.5V7.5H15.5M10.5 4.2H14.5" stroke="#1e1e1e" stroke-width="1.6" fill="none"/></svg>
<svg class="a" style="left:940px;top:29px;overflow:visible" width="16" height="16" viewBox="0 0 16 16"><path d="M0.5 15.5L4 11.5H16V13.5L14 15.5Z" fill="#1e1e1e"/><path d="M2.2 14.3H12.5" stroke="#f0f0f0" stroke-width="1"/><path d="M3.5 7H10L6.8 11.5Z" stroke="#1e1e1e" fill="none" stroke-width="1.5"/><path d="M6.8 11.5L15 1" stroke="#1e1e1e" fill="none" stroke-width="1.5"/></svg>
<svg class="a" style="left:966px;top:29px;overflow:visible" width="16" height="16" viewBox="0 0 16 16"><path d="M0.5 15.5L4 11.5H16V13.5L14 15.5Z" fill="#1e1e1e"/><path d="M2.2 14.3H12.5" stroke="#f0f0f0" stroke-width="1"/><rect x="4.5" y="1" width="7" height="6.5" stroke="#1e1e1e" fill="none" stroke-width="1.5"/><path d="M8 7.5V11.5" stroke="#1e1e1e" fill="none" stroke-width="1.5"/><path d="M6.5 6l1.5-4 1.5 4M7 4.8h2" stroke="#1e1e1e" stroke-width=".8" fill="none"/></svg>
<svg class="a" style="left:914px;top:54px;overflow:visible" width="16" height="16" viewBox="0 0 16 16"><path d="M0.5 15.5L4 11.5H16V13.5L14 15.5Z" fill="#1e1e1e"/><path d="M2.2 14.3H12.5" stroke="#f0f0f0" stroke-width="1"/><path d="M5.5 11.5V1.5H15.5V7H5.5" stroke="#1e1e1e" fill="none" stroke-width="1.5"/><path d="M8.7 1.5V7M12.2 1.5V7" stroke="#1e1e1e" stroke-width="1.3"/></svg>
<svg class="a" style="left:940px;top:54px;overflow:visible" width="16" height="16" viewBox="0 0 16 16"><path d="M0.5 15.5L4 11.5H16V13.5L14 15.5Z" fill="#1e1e1e"/><path d="M2.2 14.3H12.5" stroke="#f0f0f0" stroke-width="1"/><path d="M8 0.8L3 8H13Z" stroke="#1e1e1e" fill="none" stroke-width="1.5"/><path d="M4 8h8M8 4v8M6.5 10.5L8 12l1.5-1.5" stroke="#1e1e1e" fill="none" stroke-width="1.5"/><path d="M19 12.5V18h-5.5z" fill="#1e1e1e"/></svg>
<svg class="a" style="left:966px;top:54px;overflow:visible" width="16" height="16" viewBox="0 0 16 16"><text x="8" y="16" text-anchor="middle" font-family="Liberation Serif" font-weight="bold" font-size="20" fill="#1e1e1e">T</text></svg>
<div class="lbl" style="left:130px;transform:scaleX(0.94)">Системная</div>
<svg class="a" style="left:191px;top:79px" width="5" height="9" viewBox="0 0 5 9"><rect x="0" y="0" width="1.4" height="1.4" fill="#666"/><rect x="0" y="2" width="1.4" height="1.4" fill="#666"/><rect x="0" y="5" width="1.4" height="1.4" fill="#666"/><rect x="0" y="7" width="1.4" height="1.4" fill="#666"/><rect x="3" y="0" width="1.4" height="1.4" fill="#666"/><rect x="3" y="2" width="1.4" height="1.4" fill="#666"/><rect x="3" y="5" width="1.4" height="1.4" fill="#666"/><rect x="3" y="7" width="1.4" height="1.4" fill="#666"/></svg>
<div class="lbl" style="left:225px;transform:scaleX(1.0)">Компоненты</div>
<svg class="a" style="left:311px;top:79px" width="5" height="9" viewBox="0 0 5 9"><rect x="0" y="0" width="1.4" height="1.4" fill="#666"/><rect x="0" y="2" width="1.4" height="1.4" fill="#666"/><rect x="0" y="5" width="1.4" height="1.4" fill="#666"/><rect x="0" y="7" width="1.4" height="1.4" fill="#666"/><rect x="3" y="0" width="1.4" height="1.4" fill="#666"/><rect x="3" y="2" width="1.4" height="1.4" fill="#666"/><rect x="3" y="5" width="1.4" height="1.4" fill="#666"/><rect x="3" y="7" width="1.4" height="1.4" fill="#666"/></svg>
<div class="lbl" style="left:376px;transform:scaleX(1.0)">Размещение компонентов</div>
<svg class="a" style="left:552px;top:79px" width="5" height="9" viewBox="0 0 5 9"><rect x="0" y="0" width="1.4" height="1.4" fill="#666"/><rect x="0" y="2" width="1.4" height="1.4" fill="#666"/><rect x="0" y="5" width="1.4" height="1.4" fill="#666"/><rect x="0" y="7" width="1.4" height="1.4" fill="#666"/><rect x="3" y="0" width="1.4" height="1.4" fill="#666"/><rect x="3" y="2" width="1.4" height="1.4" fill="#666"/><rect x="3" y="5" width="1.4" height="1.4" fill="#666"/><rect x="3" y="7" width="1.4" height="1.4" fill="#666"/></svg>
<div class="lbl" style="left:585px;transform:scaleX(1.0)">Операции</div>
<svg class="a" style="left:673px;top:79px" width="5" height="9" viewBox="0 0 5 9"><rect x="0" y="0" width="1.4" height="1.4" fill="#666"/><rect x="0" y="2" width="1.4" height="1.4" fill="#666"/><rect x="0" y="5" width="1.4" height="1.4" fill="#666"/><rect x="0" y="7" width="1.4" height="1.4" fill="#666"/><rect x="3" y="0" width="1.4" height="1.4" fill="#666"/><rect x="3" y="2" width="1.4" height="1.4" fill="#666"/><rect x="3" y="5" width="1.4" height="1.4" fill="#666"/><rect x="3" y="7" width="1.4" height="1.4" fill="#666"/></svg>
<div class="lbl" style="left:687.5px;transform:scaleX(1.0)">Массив, копирование</div>
<svg class="a" style="left:794px;top:79px" width="5" height="9" viewBox="0 0 5 9"><rect x="0" y="0" width="1.4" height="1.4" fill="#666"/><rect x="0" y="2" width="1.4" height="1.4" fill="#666"/><rect x="0" y="5" width="1.4" height="1.4" fill="#666"/><rect x="0" y="7" width="1.4" height="1.4" fill="#666"/><rect x="3" y="0" width="1.4" height="1.4" fill="#666"/><rect x="3" y="2" width="1.4" height="1.4" fill="#666"/><rect x="3" y="5" width="1.4" height="1.4" fill="#666"/><rect x="3" y="7" width="1.4" height="1.4" fill="#666"/></svg>
<div class="lbl" style="left:806px;transform:scaleX(0.97)">Вспом...</div>
<svg class="a" style="left:847px;top:79px" width="5" height="9" viewBox="0 0 5 9"><rect x="0" y="0" width="1.4" height="1.4" fill="#666"/><rect x="0" y="2" width="1.4" height="1.4" fill="#666"/><rect x="0" y="5" width="1.4" height="1.4" fill="#666"/><rect x="0" y="7" width="1.4" height="1.4" fill="#666"/><rect x="3" y="0" width="1.4" height="1.4" fill="#666"/><rect x="3" y="2" width="1.4" height="1.4" fill="#666"/><rect x="3" y="5" width="1.4" height="1.4" fill="#666"/><rect x="3" y="7" width="1.4" height="1.4" fill="#666"/></svg>
<div class="lbl" style="left:859px;transform:scaleX(0.88)">Раз...</div>
<svg class="a" style="left:900px;top:79px" width="5" height="9" viewBox="0 0 5 9"><rect x="0" y="0" width="1.4" height="1.4" fill="#666"/><rect x="0" y="2" width="1.4" height="1.4" fill="#666"/><rect x="0" y="5" width="1.4" height="1.4" fill="#666"/><rect x="0" y="7" width="1.4" height="1.4" fill="#666"/><rect x="3" y="0" width="1.4" height="1.4" fill="#666"/><rect x="3" y="2" width="1.4" height="1.4" fill="#666"/><rect x="3" y="5" width="1.4" height="1.4" fill="#666"/><rect x="3" y="7" width="1.4" height="1.4" fill="#666"/></svg>
<div class="lbl" style="left:912px;transform:scaleX(1.0)">Обознач...</div>
<svg class="a" style="left:979px;top:79px" width="5" height="9" viewBox="0 0 5 9"><rect x="0" y="0" width="1.4" height="1.4" fill="#666"/><rect x="0" y="2" width="1.4" height="1.4" fill="#666"/><rect x="0" y="5" width="1.4" height="1.4" fill="#666"/><rect x="0" y="7" width="1.4" height="1.4" fill="#666"/><rect x="3" y="0" width="1.4" height="1.4" fill="#666"/><rect x="3" y="2" width="1.4" height="1.4" fill="#666"/><rect x="3" y="5" width="1.4" height="1.4" fill="#666"/><rect x="3" y="7" width="1.4" height="1.4" fill="#666"/></svg>
<div class="lbl" style="left:1074px;transform:scaleX(1.0)">Диагностика</div>
<svg class="a" style="left:1220px;top:79px" width="5" height="9" viewBox="0 0 5 9"><rect x="0" y="0" width="1.4" height="1.4" fill="#666"/><rect x="0" y="2" width="1.4" height="1.4" fill="#666"/><rect x="0" y="5" width="1.4" height="1.4" fill="#666"/><rect x="0" y="7" width="1.4" height="1.4" fill="#666"/><rect x="3" y="0" width="1.4" height="1.4" fill="#666"/><rect x="3" y="2" width="1.4" height="1.4" fill="#666"/><rect x="3" y="5" width="1.4" height="1.4" fill="#666"/><rect x="3" y="7" width="1.4" height="1.4" fill="#666"/></svg>
<div class="lbl" style="left:1291px;transform:scaleX(1.0)">Чертеж, спецификация</div>
<svg class="a" style="left:1462px;top:79px" width="5" height="9" viewBox="0 0 5 9"><rect x="0" y="0" width="1.4" height="1.4" fill="#666"/><rect x="0" y="2" width="1.4" height="1.4" fill="#666"/><rect x="0" y="5" width="1.4" height="1.4" fill="#666"/><rect x="0" y="7" width="1.4" height="1.4" fill="#666"/><rect x="3" y="0" width="1.4" height="1.4" fill="#666"/><rect x="3" y="2" width="1.4" height="1.4" fill="#666"/><rect x="3" y="5" width="1.4" height="1.4" fill="#666"/><rect x="3" y="7" width="1.4" height="1.4" fill="#666"/></svg>
<div class="lbl" style="left:1474px;transform:scaleX(1.0)">Справочник мате...</div>
<svg class="a" style="left:1584px;top:79px" width="5" height="9" viewBox="0 0 5 9"><rect x="0" y="0" width="1.4" height="1.4" fill="#666"/><rect x="0" y="2" width="1.4" height="1.4" fill="#666"/><rect x="0" y="5" width="1.4" height="1.4" fill="#666"/><rect x="0" y="7" width="1.4" height="1.4" fill="#666"/><rect x="3" y="0" width="1.4" height="1.4" fill="#666"/><rect x="3" y="2" width="1.4" height="1.4" fill="#666"/><rect x="3" y="5" width="1.4" height="1.4" fill="#666"/><rect x="3" y="7" width="1.4" height="1.4" fill="#666"/></svg>
<div class="lbl" style="left:1596px;transform:scaleX(1.0)">Справочник стан...</div>
<svg class="a" style="left:1705px;top:79px" width="5" height="9" viewBox="0 0 5 9"><rect x="0" y="0" width="1.4" height="1.4" fill="#666"/><rect x="0" y="2" width="1.4" height="1.4" fill="#666"/><rect x="0" y="5" width="1.4" height="1.4" fill="#666"/><rect x="0" y="7" width="1.4" height="1.4" fill="#666"/><rect x="3" y="0" width="1.4" height="1.4" fill="#666"/><rect x="3" y="2" width="1.4" height="1.4" fill="#666"/><rect x="3" y="5" width="1.4" height="1.4" fill="#666"/><rect x="3" y="7" width="1.4" height="1.4" fill="#666"/></svg>
<svg class="a" style="left:657px;top:83px" width="9" height="5" viewBox="0 0 9 5"><path d="M0 0h9L4.5 5z" fill="#333"/></svg>
<svg class="a" style="left:884px;top:83px" width="9" height="5" viewBox="0 0 9 5"><path d="M0 0h9L4.5 5z" fill="#333"/></svg>
<svg class="a" style="left:965px;top:83px" width="9" height="5" viewBox="0 0 9 5"><path d="M0 0h9L4.5 5z" fill="#333"/></svg>
<svg class="a" style="left:1567px;top:83px" width="9" height="5" viewBox="0 0 9 5"><path d="M0 0h9L4.5 5z" fill="#333"/></svg>
<svg class="a" style="left:1688px;top:83px" width="9" height="5" viewBox="0 0 9 5"><path d="M0 0h9L4.5 5z" fill="#333"/></svg>
</div>
<div id="side" class="a">
<div id="sidetop" class="a"></div>
<svg class="a" style="left:6px;top:4px" width="12" height="16" viewBox="0 0 12 16"><rect x="0.6" y="0.6" width="2.8" height="2.8" fill="none" stroke="#222" stroke-width="1"/><path d="M2 3.4V13.5H7.5M2 5.5H7.5M2 9.5H7.5" stroke="#222" stroke-width="1.1" fill="none"/><rect x="7.6" y="4.2" width="2.8" height="2.6" fill="none" stroke="#222" stroke-width="1"/><rect x="7.6" y="8.2" width="2.8" height="2.6" fill="none" stroke="#222" stroke-width="1"/><rect x="7.6" y="12.2" width="2.8" height="2.6" fill="none" stroke="#222" stroke-width="1"/></svg>
<svg class="a" style="left:6px;top:29px" width="14" height="16" viewBox="0 0 14 16"><rect x="1" y="1" width="12" height="14.5" fill="none" stroke="#222" stroke-width="1.3"/><rect x="3.3" y="3.5" width="2.5" height="2.5" fill="none" stroke="#222" stroke-width="1"/><path d="M7 4.8h4M7 8.5h4M7 12h4M3 8.5l1 1 2-2M3 12l1 1 2-2" stroke="#222" stroke-width="1.1" fill="none"/></svg>
<svg class="a" style="left:5px;top:54px" width="16" height="16" viewBox="0 0 16 16"><text x="1" y="13" font-family="Liberation Serif" font-style="italic" font-size="15" fill="#333">f</text><text x="7" y="14.5" font-family="Liberation Sans" font-size="9" fill="#333">x</text></svg>
<svg class="a" style="left:4px;top:79px" width="16" height="16" viewBox="0 0 16 16"><path d="M1.5 1.5h13l-1 1.5 1 1.5h-13a1.5 1.5 0 0 1 0-3zM1.5 6.5h13l-1 1.5 1 1.5h-13a1.5 1.5 0 0 1 0-3zM1.5 11.5h13l-1 1.5 1 1.5h-13a1.5 1.5 0 0 1 0-3z" fill="#2a2a2a"/></svg>
<svg class="a" style="left:5px;top:106px" width="14" height="14" viewBox="0 0 14 14"><rect x="5" y="0.5" width="4" height="3.5" fill="#2a2a2a"/><path d="M7 4v3M2 10V7h10v3M7 7v3" stroke="#2a2a2a" stroke-width="1.2" fill="none"/><rect x="0.5" y="10" width="3" height="3" fill="#2a2a2a"/><rect x="5.5" y="10" width="3" height="3" fill="#2a2a2a"/><rect x="10.5" y="10" width="3" height="3" fill="#2a2a2a"/></svg>
</div>
<div id="sideborder" class="a"></div>
<div id="taskbar" class="a"></div>

<svg class="a" style="left:0;top:0" width="1919" height="1043" viewBox="0 0 1919 1043"><defs>
<linearGradient id="red" x1="810" x2="932" y1="0" y2="0" gradientUnits="userSpaceOnUse">
<stop offset="0" stop-color="#3a0000"/><stop offset="0.12" stop-color="#560000"/><stop offset="0.25" stop-color="#7a0000"/><stop offset="0.45" stop-color="#a40000"/>
<stop offset="0.6" stop-color="#dc0000"/><stop offset="0.68" stop-color="#ff0808"/><stop offset="0.8" stop-color="#f80000"/><stop offset="1" stop-color="#e40000"/>
</linearGradient>
<linearGradient id="cone" x1="810" x2="932" y1="0" y2="0" gradientUnits="userSpaceOnUse">
<stop offset="0" stop-color="#000"/><stop offset="0.14" stop-color="#0e0e0e"/><stop offset="0.35" stop-color="#5a5a5a"/><stop offset="0.55" stop-color="#6a6a6a"/><stop offset="0.75" stop-color="#4a4a4a"/><stop offset="0.88" stop-color="#1a1a1a"/><stop offset="1" stop-color="#000"/>
</linearGradient>
<linearGradient id="motor" x1="0" x2="1" y1="0" y2="0">
<stop offset="0" stop-color="#6a6a6a"/><stop offset="0.5" stop-color="#b4b4b4"/><stop offset="1" stop-color="#6e6e6e"/>
</linearGradient>
<pattern id="hatch" width="4" height="4" patternUnits="userSpaceOnUse" patternTransform="rotate(45)">
<rect width="4" height="4" fill="#666"/><rect width="1.3" height="4" fill="#2a2a2a"/>
</pattern>
<pattern id="dots" width="4" height="4" patternUnits="userSpaceOnUse">
<rect width="4" height="4" fill="#f2f2f2"/><rect x="1" y="1" width="1" height="1" fill="#555"/>
</pattern>
</defs>
<line x1="430.2" y1="451" x2="430.2" y2="537" stroke="#2a2a2a" stroke-width="1.5" />
<line x1="422" y1="537.5" x2="439" y2="537.5" stroke="#555" stroke-width="2" />
<line x1="422" y1="451.5" x2="439" y2="451.5" stroke="#444" stroke-width="1.5" />
<line x1="1292.5" y1="453" x2="1292.5" y2="537" stroke="#2a2a2a" stroke-width="1.5" />
<line x1="1284" y1="537.5" x2="1300" y2="537.5" stroke="#666" stroke-width="2" />
<path d="M1303 436.5H1321.5V456" fill="none" stroke="#333" stroke-width="1.3" />
<polygon points="1316,455 1327,455 1321.5,460" fill="#333"/>
<rect x="1152.5" y="451.5" width="2.5" height="95" fill="#333" />
<rect x="1231" y="451.5" width="4.5" height="96" fill="#555" stroke="#111" stroke-width="0.8" />
<rect x="1152.5" y="541" width="82" height="6" fill="#555" stroke="#111" stroke-width="0.8" />
<rect x="1155" y="475.6" width="76" height="2.4" fill="#222" />
<rect x="1155" y="499.2" width="76" height="2.4" fill="#222" />
<rect x="1155" y="524.0" width="76" height="2.4" fill="#222" />
<rect x="1224.6" y="454" width="6.4" height="22" fill="#1a9494" stroke="#111" stroke-width="0.8" />
<rect x="1235" y="468.3" width="44" height="2.4" fill="#1e1e1e" />
<polygon points="1235,463.5 1245,467.5 1245,471.5 1235,471.5" fill="#444"/>
<rect x="1238" y="470.5" width="10" height="2" fill="#aaa" />
<rect x="1273" y="465.5" width="3" height="8" fill="#333" />
<rect x="1235" y="492.8" width="44" height="2.4" fill="#1e1e1e" />
<polygon points="1235,488 1245,492 1245,496 1235,496" fill="#444"/>
<rect x="1238" y="495" width="10" height="2" fill="#aaa" />
<rect x="1273" y="490" width="3" height="8" fill="#333" />
<rect x="1235" y="517.3" width="44" height="2.4" fill="#1e1e1e" />
<polygon points="1235,512.5 1245,516.5 1245,520.5 1235,520.5" fill="#444"/>
<rect x="1238" y="519.5" width="10" height="2" fill="#aaa" />
<rect x="1273" y="514.5" width="3" height="8" fill="#333" />
<rect x="1235" y="541.8" width="44" height="2.4" fill="#1e1e1e" />
<polygon points="1235,537 1245,541 1245,545 1235,545" fill="#444"/>
<rect x="1238" y="544" width="10" height="2" fill="#aaa" />
<rect x="1273" y="539" width="3" height="8" fill="#333" />
<path d="M1292 454H1275V467" fill="none" stroke="#444" stroke-width="1.4" />
<path d="M1292 478.5H1275V491.5" fill="none" stroke="#444" stroke-width="1.4" />
<path d="M1292 503H1275V516" fill="none" stroke="#444" stroke-width="1.4" />
<path d="M1292 527.5H1275V540.5" fill="none" stroke="#444" stroke-width="1.4" />
<rect x="768" y="452" width="3" height="203" fill="#6a6a6a" stroke="#111" stroke-width="0.6" />
<line x1="786.6" y1="452" x2="786.6" y2="510" stroke="#333" stroke-width="1" />
<line x1="786.6" y1="588" x2="786.6" y2="648" stroke="#333" stroke-width="1" />
<rect x="806" y="452" width="3" height="196" fill="#6a6a6a" stroke="#111" stroke-width="0.6" />
<rect x="768" y="477" width="40" height="2" fill="#1a1a1a" />
<rect x="768" y="586" width="40" height="2" fill="#1a1a1a" />
<rect x="768" y="615" width="40" height="2" fill="#1a1a1a" />
<polygon points="768,508 809,508 809,519 800,522 768,516" fill="#666" stroke="#111" stroke-width="0.8"/>
<polygon points="806,519 815,519 815,576 823,576 836,648 806,648" fill="#7a7a7a" stroke="#111" stroke-width="0.6"/>
<polygon points="768,647 831,647 837,654 828,661 790,660 768,654" fill="#707070" stroke="#111" stroke-width="0.8"/>
<polygon points="810.8,576 931.6,576 915.3,663.5 826,663.5" fill="url(#cone)"/>
<line x1="812.0" y1="577" x2="827.0" y2="663" stroke="#0a0a0a" stroke-width="0.8" />
<line x1="814.5" y1="577" x2="828.9" y2="663" stroke="#0a0a0a" stroke-width="0.8" />
<line x1="817.0" y1="577" x2="830.7" y2="663" stroke="#0a0a0a" stroke-width="0.8" />
<line x1="819.5" y1="577" x2="832.6" y2="663" stroke="#0a0a0a" stroke-width="0.8" />
<line x1="822.0" y1="577" x2="834.4" y2="663" stroke="#0a0a0a" stroke-width="0.8" />
<line x1="824.6" y1="577" x2="836.3" y2="663" stroke="#0a0a0a" stroke-width="0.8" />
<line x1="827.1" y1="577" x2="838.1" y2="663" stroke="#0a0a0a" stroke-width="0.8" />
<line x1="829.6" y1="577" x2="840.0" y2="663" stroke="#0a0a0a" stroke-width="0.8" />
<line x1="832.1" y1="577" x2="841.8" y2="663" stroke="#0a0a0a" stroke-width="0.8" />
<line x1="834.6" y1="577" x2="843.7" y2="663" stroke="#0a0a0a" stroke-width="0.8" />
<line x1="837.1" y1="577" x2="845.5" y2="663" stroke="#0a0a0a" stroke-width="0.8" />
<line x1="839.6" y1="577" x2="847.4" y2="663" stroke="#0a0a0a" stroke-width="0.8" />
<line x1="842.1" y1="577" x2="849.2" y2="663" stroke="#0a0a0a" stroke-width="0.8" />
<line x1="844.6" y1="577" x2="851.1" y2="663" stroke="#0a0a0a" stroke-width="0.8" />
<line x1="847.1" y1="577" x2="852.9" y2="663" stroke="#0a0a0a" stroke-width="0.8" />
<line x1="849.7" y1="577" x2="854.8" y2="663" stroke="#0a0a0a" stroke-width="0.8" />
<line x1="852.2" y1="577" x2="856.6" y2="663" stroke="#0a0a0a" stroke-width="0.8" />
<line x1="854.7" y1="577" x2="858.5" y2="663" stroke="#0a0a0a" stroke-width="0.8" />
<line x1="857.2" y1="577" x2="860.3" y2="663" stroke="#0a0a0a" stroke-width="0.8" />
<line x1="859.7" y1="577" x2="862.2" y2="663" stroke="#0a0a0a" stroke-width="0.8" />
<line x1="862.2" y1="577" x2="864.0" y2="663" stroke="#0a0a0a" stroke-width="0.8" />
<line x1="864.7" y1="577" x2="865.9" y2="663" stroke="#0a0a0a" stroke-width="0.8" />
<line x1="867.2" y1="577" x2="867.7" y2="663" stroke="#0a0a0a" stroke-width="0.8" />
<line x1="869.7" y1="577" x2="869.6" y2="663" stroke="#0a0a0a" stroke-width="0.8" />
<line x1="872.3" y1="577" x2="871.4" y2="663" stroke="#0a0a0a" stroke-width="0.8" />
<line x1="874.8" y1="577" x2="873.3" y2="663" stroke="#0a0a0a" stroke-width="0.8" />
<line x1="877.3" y1="577" x2="875.1" y2="663" stroke="#0a0a0a" stroke-width="0.8" />
<line x1="879.8" y1="577" x2="877.0" y2="663" stroke="#0a0a0a" stroke-width="0.8" />
<line x1="882.3" y1="577" x2="878.8" y2="663" stroke="#0a0a0a" stroke-width="0.8" />
<line x1="884.8" y1="577" x2="880.7" y2="663" stroke="#0a0a0a" stroke-width="0.8" />
<line x1="887.3" y1="577" x2="882.5" y2="663" stroke="#0a0a0a" stroke-width="0.8" />
<line x1="889.8" y1="577" x2="884.4" y2="663" stroke="#0a0a0a" stroke-width="0.8" />
<line x1="892.3" y1="577" x2="886.2" y2="663" stroke="#0a0a0a" stroke-width="0.8" />
<line x1="894.9" y1="577" x2="888.1" y2="663" stroke="#0a0a0a" stroke-width="0.8" />
<line x1="897.4" y1="577" x2="889.9" y2="663" stroke="#0a0a0a" stroke-width="0.8" />
<line x1="899.9" y1="577" x2="891.8" y2="663" stroke="#0a0a0a" stroke-width="0.8" />
<line x1="902.4" y1="577" x2="893.6" y2="663" stroke="#0a0a0a" stroke-width="0.8" />
<line x1="904.9" y1="577" x2="895.5" y2="663" stroke="#0a0a0a" stroke-width="0.8" />
<line x1="907.4" y1="577" x2="897.3" y2="663" stroke="#0a0a0a" stroke-width="0.8" />
<line x1="909.9" y1="577" x2="899.2" y2="663" stroke="#0a0a0a" stroke-width="0.8" />
<line x1="912.4" y1="577" x2="901.0" y2="663" stroke="#0a0a0a" stroke-width="0.8" />
<line x1="914.9" y1="577" x2="902.9" y2="663" stroke="#0a0a0a" stroke-width="0.8" />
<line x1="917.4" y1="577" x2="904.7" y2="663" stroke="#0a0a0a" stroke-width="0.8" />
<line x1="920.0" y1="577" x2="906.6" y2="663" stroke="#0a0a0a" stroke-width="0.8" />
<line x1="922.5" y1="577" x2="908.4" y2="663" stroke="#0a0a0a" stroke-width="0.8" />
<line x1="925.0" y1="577" x2="910.3" y2="663" stroke="#0a0a0a" stroke-width="0.8" />
<line x1="927.5" y1="577" x2="912.1" y2="663" stroke="#0a0a0a" stroke-width="0.8" />
<line x1="930.0" y1="577" x2="914.0" y2="663" stroke="#0a0a0a" stroke-width="0.8" />
<rect x="823" y="662.5" width="96" height="3" fill="#1a1a1a" />
<rect x="897" y="632" width="7" height="16" fill="#8a8a8a" stroke="#111" stroke-width="0.6" />
<rect x="904" y="634" width="7" height="12" fill="#333" />
<rect x="810" y="452" width="122" height="124" fill="url(#red)" />
<rect x="820" y="452" width="6" height="58" fill="#300000" opacity="0.45"/>
<line x1="810" y1="510.2" x2="932" y2="510.2" stroke="#3a0000" stroke-width="1" />
<line x1="886.6" y1="452" x2="886.6" y2="576" stroke="#4a0000" stroke-width="0.9" />
<line x1="901" y1="452" x2="901" y2="576" stroke="#4a0000" stroke-width="0.9" />
<line x1="913.5" y1="452" x2="913.5" y2="576" stroke="#4a0000" stroke-width="0.9" />
<line x1="923.4" y1="452" x2="923.4" y2="576" stroke="#4a0000" stroke-width="0.9" />
<line x1="839" y1="510" x2="839" y2="576" stroke="#4a0000" stroke-width="0.9" />
<line x1="868" y1="510" x2="868" y2="576" stroke="#4a0000" stroke-width="0.9" />
<line x1="840" y1="452" x2="840" y2="510" stroke="#500000" stroke-width="0.6" />
<line x1="810" y1="527" x2="840" y2="527" stroke="#400000" stroke-width="0.7" />
<line x1="900" y1="527" x2="932" y2="527" stroke="#400000" stroke-width="0.7" />
<path d="M824 550.5h7.5v15H824a7.5 7.5 0 0 1 0-15z" fill="#9a9a9a" stroke="#222" stroke-width="0.6" />
<rect x="827" y="550.5" width="4.5" height="15" fill="#5a5a5a" />
<circle cx="822.5" cy="558" r="2.1" fill="#333"/>
<rect x="909.5" y="549" width="4.5" height="16" fill="#9c9c9c" stroke="#111" stroke-width="0.5" />
<path d="M914 549h2.5a8 8 0 0 1 0 16H914z" fill="#1e1e1e" stroke="#111" stroke-width="1" />
<circle cx="916.8" cy="557" r="1.9" fill="#8a8a8a"/>
<rect x="810" y="452" width="122" height="124" fill="none" stroke="#200000" stroke-width="0.8" />
<line x1="768" y1="514" x2="828" y2="577" stroke="#111" stroke-width="2.6" />
<line x1="768" y1="514" x2="828" y2="577" stroke="#8a8a8a" stroke-width="1" />
<line x1="836" y1="577" x2="808" y2="646" stroke="#111" stroke-width="2.2" />
<line x1="836" y1="577" x2="808" y2="646" stroke="#777" stroke-width="0.8" />
<rect x="858.5" y="664" width="23.5" height="80" fill="#1e1e1e" />
<rect x="860" y="664" width="4" height="80" fill="#3a3a3a" />
<rect x="863.5" y="664" width="12.5" height="85" fill="#5cb82a" />
<rect x="864" y="664" width="2.5" height="85" fill="#74cc44" />
<line x1="866" y1="712" x2="872" y2="712" stroke="#2a5a10" stroke-width="1" />
<rect x="847.5" y="727.3" width="123" height="2" fill="#1e1e1e" />
<rect x="847.5" y="727.3" width="2" height="64" fill="#1e1e1e" />
<rect x="943.4" y="727.3" width="2" height="64" fill="#1e1e1e" />
<rect x="968.5" y="727.3" width="2.5" height="64" fill="#1e1e1e" />
<rect x="905" y="754.5" width="66" height="2" fill="#1e1e1e" />
<rect x="806.5" y="731" width="41" height="2" fill="#1e1e1e" />
<rect x="806.5" y="731" width="2" height="60" fill="#1e1e1e" />
<rect x="814.5" y="731" width="1.8" height="60" fill="#1e1e1e" />
<rect x="839" y="731" width="1.8" height="60" fill="#1e1e1e" />
<rect x="806.5" y="763" width="35" height="1.8" fill="#1e1e1e" />
<path d="M836 791V740a4 4 0 0 1 4-4h7" fill="none" stroke="#444" stroke-width="1.3" />
<rect x="803.5" y="772" width="3.5" height="128" fill="#6a6a6a" stroke="#111" stroke-width="0.6" />
<polygon points="857,745 882,745 883,760 857,760" fill="#62bf2e" stroke="#111" stroke-width="0.8"/>
<line x1="862" y1="752" x2="862" y2="761" stroke="#1e1e1e" stroke-width="1" />
<line x1="868" y1="752" x2="868" y2="761" stroke="#1e1e1e" stroke-width="1" />
<line x1="874" y1="752" x2="874" y2="761" stroke="#1e1e1e" stroke-width="1" />
<rect x="881.8" y="736.4" width="12.2" height="15.3" fill="#ffee00" stroke="#111" stroke-width="0.6" />
<circle cx="887.5" cy="744" r="1.2" fill="#333"/>
<rect x="900" y="736.4" width="13.4" height="15.3" fill="#ffee00" stroke="#111" stroke-width="0.6" />
<circle cx="906" cy="744" r="1.2" fill="#333"/>
<polygon points="904,754 925,754 951,786 904,786" fill="#5e5e5e" stroke="#111" stroke-width="0.6"/>
<rect x="849" y="754.5" width="56" height="35" fill="#585858" stroke="#111" stroke-width="0.8" />
<rect x="851" y="757" width="52" height="10" fill="#6a6a6a" stroke="#111" stroke-width="0.5" />
<rect x="856" y="757" width="5" height="10" fill="#4e4e4e" stroke="#111" stroke-width="0.4" />
<rect x="862" y="757" width="5" height="10" fill="#4e4e4e" stroke="#111" stroke-width="0.4" />
<rect x="868" y="757" width="5" height="10" fill="#4e4e4e" stroke="#111" stroke-width="0.4" />
<rect x="874" y="757" width="5" height="10" fill="#4e4e4e" stroke="#111" stroke-width="0.4" />
<rect x="880" y="757" width="5" height="10" fill="#4e4e4e" stroke="#111" stroke-width="0.4" />
<rect x="886" y="757" width="5" height="10" fill="#4e4e4e" stroke="#111" stroke-width="0.4" />
<rect x="886" y="757" width="10" height="10" fill="#bdbdbd" stroke="#111" stroke-width="0.4" />
<rect x="860" y="770" width="26.5" height="6" fill="#d8dcf0" stroke="#111" stroke-width="0.6" />
<rect x="853" y="777" width="50" height="4" fill="#444" />
<rect x="860" y="782" width="27" height="7" fill="#d8dcf0" stroke="#111" stroke-width="0.6" />
<rect x="863" y="783" width="2.2" height="5" fill="#222" />
<rect x="867" y="783" width="2.2" height="5" fill="#222" />
<rect x="871" y="783" width="2.2" height="5" fill="#222" />
<rect x="875" y="783" width="2.2" height="5" fill="#222" />
<rect x="879" y="783" width="2.2" height="5" fill="#222" />
<rect x="906" y="770" width="26" height="14" fill="#d8dcf0" stroke="#111" stroke-width="0.6" />
<rect x="909" y="775" width="2.4" height="7" fill="#222" />
<rect x="913" y="775" width="2.4" height="7" fill="#222" />
<rect x="917" y="775" width="2.4" height="7" fill="#222" />
<rect x="921" y="775" width="2.4" height="7" fill="#222" />
<rect x="925" y="775" width="2.4" height="7" fill="#222" />
<rect x="807.5" y="789.5" width="163.5" height="6.5" fill="#6c6c6c" stroke="#111" stroke-width="1" />
<rect x="808" y="796" width="163" height="109" fill="#8c8c8c" stroke="#111" stroke-width="1" />
<rect x="811" y="798" width="46" height="58.5" fill="url(#dots)" stroke="#111" stroke-width="0.8" />
<polygon points="812,799 846,799 846,804 812,817" fill="#555"/>
<rect x="846" y="799" width="10" height="57" fill="#9a9a9a" stroke="#111" stroke-width="0.6" />
<rect x="815" y="834" width="6" height="14" fill="#e8e8f0" stroke="#111" stroke-width="0.6" />
<rect x="833" y="822" width="12" height="32" fill="#4a4a4a" stroke="#111" stroke-width="0.6" />
<rect x="826" y="838" width="7" height="16" fill="#5a5a5a" stroke="#111" stroke-width="0.6" />
<rect x="813" y="850" width="30" height="5" fill="#3a3a3a" />
<rect x="811" y="859.5" width="46" height="43" fill="#9e9e9e" stroke="#111" stroke-width="0.8" />
<rect x="859" y="797" width="37" height="107" fill="#a8a8a8" stroke="#111" stroke-width="0.8" />
<rect x="866.5" y="798.5" width="28" height="48.5" fill="#9a9a9a" stroke="#111" stroke-width="1.3" />
<rect x="866.5" y="850.5" width="28" height="49" fill="#9a9a9a" stroke="#111" stroke-width="1.3" />
<line x1="868" y1="879" x2="889" y2="879" stroke="#e8d400" stroke-width="1.6" />
<rect x="889" y="868" width="4" height="18" fill="#c02020" />
<rect x="887" y="834" width="5" height="3" fill="#444" />
<rect x="863" y="843" width="3" height="8" fill="#555" />
<rect x="903.5" y="796" width="67.5" height="109" fill="#8a8a8a" stroke="#111" stroke-width="1" />
<line x1="906.0" y1="797" x2="906.0" y2="904" stroke="#5e5e5e" stroke-width="0.9" />
<line x1="908.2" y1="797" x2="908.2" y2="904" stroke="#a9a9a9" stroke-width="1.2" />
<line x1="910.8" y1="797" x2="910.8" y2="904" stroke="#5e5e5e" stroke-width="0.9" />
<line x1="913.0" y1="797" x2="913.0" y2="904" stroke="#a9a9a9" stroke-width="1.2" />
<line x1="915.6" y1="797" x2="915.6" y2="904" stroke="#5e5e5e" stroke-width="0.9" />
<line x1="917.8" y1="797" x2="917.8" y2="904" stroke="#a9a9a9" stroke-width="1.2" />
<line x1="920.4" y1="797" x2="920.4" y2="904" stroke="#5e5e5e" stroke-width="0.9" />
<line x1="922.6" y1="797" x2="922.6" y2="904" stroke="#a9a9a9" stroke-width="1.2" />
<line x1="925.2" y1="797" x2="925.2" y2="904" stroke="#5e5e5e" stroke-width="0.9" />
<line x1="927.4" y1="797" x2="927.4" y2="904" stroke="#a9a9a9" stroke-width="1.2" />
<line x1="930.0" y1="797" x2="930.0" y2="904" stroke="#5e5e5e" stroke-width="0.9" />
<line x1="932.2" y1="797" x2="932.2" y2="904" stroke="#a9a9a9" stroke-width="1.2" />
<line x1="934.8" y1="797" x2="934.8" y2="904" stroke="#5e5e5e" stroke-width="0.9" />
<line x1="937.0" y1="797" x2="937.0" y2="904" stroke="#a9a9a9" stroke-width="1.2" />
<line x1="939.6" y1="797" x2="939.6" y2="904" stroke="#5e5e5e" stroke-width="0.9" />
<line x1="941.8" y1="797" x2="941.8" y2="904" stroke="#a9a9a9" stroke-width="1.2" />
<line x1="944.4" y1="797" x2="944.4" y2="904" stroke="#5e5e5e" stroke-width="0.9" />
<line x1="946.6" y1="797" x2="946.6" y2="904" stroke="#a9a9a9" stroke-width="1.2" />
<line x1="949.2" y1="797" x2="949.2" y2="904" stroke="#5e5e5e" stroke-width="0.9" />
<line x1="951.4" y1="797" x2="951.4" y2="904" stroke="#a9a9a9" stroke-width="1.2" />
<line x1="954.0" y1="797" x2="954.0" y2="904" stroke="#5e5e5e" stroke-width="0.9" />
<line x1="956.2" y1="797" x2="956.2" y2="904" stroke="#a9a9a9" stroke-width="1.2" />
<line x1="958.8" y1="797" x2="958.8" y2="904" stroke="#5e5e5e" stroke-width="0.9" />
<line x1="961.0" y1="797" x2="961.0" y2="904" stroke="#a9a9a9" stroke-width="1.2" />
<line x1="963.6" y1="797" x2="963.6" y2="904" stroke="#5e5e5e" stroke-width="0.9" />
<line x1="965.8" y1="797" x2="965.8" y2="904" stroke="#a9a9a9" stroke-width="1.2" />
<line x1="968.4" y1="797" x2="968.4" y2="904" stroke="#5e5e5e" stroke-width="0.9" />
<line x1="970.6" y1="797" x2="970.6" y2="904" stroke="#a9a9a9" stroke-width="1.2" />
<rect x="896" y="796" width="8" height="109" fill="#7a7a7a" stroke="#111" stroke-width="0.8" />
<circle cx="950" cy="897" r="2" fill="#ddd" stroke="#111" stroke-width="0.8"/>
<circle cx="965" cy="897" r="1.8" fill="#ddd" stroke="#111" stroke-width="0.8"/>
<line x1="808" y1="905" x2="971" y2="905" stroke="#111" stroke-width="1.5" />
<polygon points="638.4,855 808,851.4 808,879 638.4,876" fill="#515151" stroke="#111" stroke-width="1.2"/>
<polygon points="638.4,858.5 808,855.5 808,859.5 638.4,861.5" fill="#3e3e3e"/>
<polygon points="638.4,870.5 808,874 808,876.5 638.4,873" fill="#3e3e3e"/>
<line x1="638.4" y1="865.5" x2="808" y2="865.5" stroke="#111" stroke-width="1.6" />
<circle cx="647" cy="862.3" r="1.6" fill="none" stroke="#151515" stroke-width="1"/>
<circle cx="647" cy="869" r="1.6" fill="none" stroke="#151515" stroke-width="1"/>
<circle cx="671" cy="862.3" r="1.6" fill="none" stroke="#151515" stroke-width="1"/>
<circle cx="671" cy="869" r="1.6" fill="none" stroke="#151515" stroke-width="1"/>
<circle cx="695" cy="862.3" r="1.6" fill="none" stroke="#151515" stroke-width="1"/>
<circle cx="695" cy="869" r="1.6" fill="none" stroke="#151515" stroke-width="1"/>
<circle cx="719" cy="862.3" r="1.6" fill="none" stroke="#151515" stroke-width="1"/>
<circle cx="719" cy="869" r="1.6" fill="none" stroke="#151515" stroke-width="1"/>
<circle cx="729" cy="862.3" r="1.6" fill="none" stroke="#151515" stroke-width="1"/>
<circle cx="729" cy="869" r="1.6" fill="none" stroke="#151515" stroke-width="1"/>
<circle cx="754" cy="862.3" r="1.6" fill="none" stroke="#151515" stroke-width="1"/>
<circle cx="754" cy="869" r="1.6" fill="none" stroke="#151515" stroke-width="1"/>
<circle cx="778" cy="862.3" r="1.6" fill="none" stroke="#151515" stroke-width="1"/>
<circle cx="778" cy="869" r="1.6" fill="none" stroke="#151515" stroke-width="1"/>
<circle cx="802" cy="862.3" r="1.6" fill="none" stroke="#151515" stroke-width="1"/>
<circle cx="802" cy="869" r="1.6" fill="none" stroke="#151515" stroke-width="1"/>
<rect x="628" y="855" width="5" height="21.5" fill="#555" stroke="#111" stroke-width="0.8" />
<rect x="633" y="860" width="6" height="11" fill="#4a4a4a" stroke="#111" stroke-width="0.6" />
<rect x="629.5" y="864" width="2" height="3" fill="#eee" />
<polygon points="499.7,443.5 1222,443.5 1212,451.6 511,451.6" fill="#5a5a5a"/>
<line x1="511" y1="450.9" x2="1212" y2="450.9" stroke="#111" stroke-width="1.4" />
<line x1="499.7" y1="443.5" x2="511" y2="451.6" stroke="#111" stroke-width="1" />
<rect x="455.5" y="383" width="811.5" height="60.5" fill="#5b5b5b" />
<rect x="455.5" y="437" width="811.5" height="6.5" fill="#5c5c5c" />
<line x1="455.5" y1="436.4" x2="1267" y2="436.4" stroke="#111" stroke-width="1.3" />
<rect x="455.5" y="441.2" width="811.5" height="2.3" fill="#404040" />
<line x1="455.5" y1="443.8" x2="1267" y2="443.8" stroke="#222" stroke-width="0.6" />
<line x1="456" y1="410.8" x2="1267" y2="410.8" stroke="#111" stroke-width="1.5" />
<line x1="456" y1="383" x2="456" y2="444" stroke="#111" stroke-width="1.2" />
<line x1="1266.5" y1="383" x2="1266.5" y2="444" stroke="#111" stroke-width="1.2" />
<rect x="423" y="378.6" width="844" height="3.4" fill="#5a5a5a" />
<rect x="455.5" y="382" width="811.5" height="2" fill="#111" />
<polygon points="423,382 455.5,382 455.5,436 441,436 423,400" fill="#585858"/>
<line x1="423.5" y1="378.6" x2="423.5" y2="386" stroke="#111" stroke-width="1" />
<polygon points="425,369.8 482,369.8 486,367.2 1230,367.2 1230,372.9 425,372.9" fill="#050505"/>
<rect x="425" y="372.9" width="805" height="3.1" fill="#3e3e3e" />
<rect x="436" y="373.5" width="2" height="2.2" fill="#111" />
<rect x="441" y="373.5" width="2" height="2.2" fill="#111" />
<rect x="467" y="373.5" width="2" height="2.2" fill="#111" />
<rect x="472" y="373.5" width="2" height="2.2" fill="#111" />
<rect x="498" y="373.5" width="2" height="2.2" fill="#111" />
<rect x="503" y="373.5" width="2" height="2.2" fill="#111" />
<rect x="529" y="373.5" width="2" height="2.2" fill="#111" />
<rect x="534" y="373.5" width="2" height="2.2" fill="#111" />
<rect x="560" y="373.5" width="2" height="2.2" fill="#111" />
<rect x="565" y="373.5" width="2" height="2.2" fill="#111" />
<rect x="591" y="373.5" width="2" height="2.2" fill="#111" />
<rect x="596" y="373.5" width="2" height="2.2" fill="#111" />
<rect x="622" y="373.5" width="2" height="2.2" fill="#111" />
<rect x="627" y="373.5" width="2" height="2.2" fill="#111" />
<rect x="653" y="373.5" width="2" height="2.2" fill="#111" />
<rect x="658" y="373.5" width="2" height="2.2" fill="#111" />
<rect x="684" y="373.5" width="2" height="2.2" fill="#111" />
<rect x="689" y="373.5" width="2" height="2.2" fill="#111" />
<rect x="715" y="373.5" width="2" height="2.2" fill="#111" />
<rect x="720" y="373.5" width="2" height="2.2" fill="#111" />
<rect x="746" y="373.5" width="2" height="2.2" fill="#111" />
<rect x="751" y="373.5" width="2" height="2.2" fill="#111" />
<rect x="777" y="373.5" width="2" height="2.2" fill="#111" />
<rect x="782" y="373.5" width="2" height="2.2" fill="#111" />
<rect x="808" y="373.5" width="2" height="2.2" fill="#111" />
<rect x="813" y="373.5" width="2" height="2.2" fill="#111" />
<rect x="839" y="373.5" width="2" height="2.2" fill="#111" />
<rect x="844" y="373.5" width="2" height="2.2" fill="#111" />
<rect x="870" y="373.5" width="2" height="2.2" fill="#111" />
<rect x="875" y="373.5" width="2" height="2.2" fill="#111" />
<rect x="901" y="373.5" width="2" height="2.2" fill="#111" />
<rect x="906" y="373.5" width="2" height="2.2" fill="#111" />
<rect x="932" y="373.5" width="2" height="2.2" fill="#111" />
<rect x="937" y="373.5" width="2" height="2.2" fill="#111" />
<rect x="963" y="373.5" width="2" height="2.2" fill="#111" />
<rect x="968" y="373.5" width="2" height="2.2" fill="#111" />
<rect x="994" y="373.5" width="2" height="2.2" fill="#111" />
<rect x="999" y="373.5" width="2" height="2.2" fill="#111" />
<rect x="1025" y="373.5" width="2" height="2.2" fill="#111" />
<rect x="1030" y="373.5" width="2" height="2.2" fill="#111" />
<rect x="1056" y="373.5" width="2" height="2.2" fill="#111" />
<rect x="1061" y="373.5" width="2" height="2.2" fill="#111" />
<rect x="1087" y="373.5" width="2" height="2.2" fill="#111" />
<rect x="1092" y="373.5" width="2" height="2.2" fill="#111" />
<rect x="1118" y="373.5" width="2" height="2.2" fill="#111" />
<rect x="1123" y="373.5" width="2" height="2.2" fill="#111" />
<rect x="1149" y="373.5" width="2" height="2.2" fill="#111" />
<rect x="1154" y="373.5" width="2" height="2.2" fill="#111" />
<rect x="1180" y="373.5" width="2" height="2.2" fill="#111" />
<rect x="1185" y="373.5" width="2" height="2.2" fill="#111" />
<rect x="1211" y="373.5" width="2" height="2.2" fill="#111" />
<rect x="1216" y="373.5" width="2" height="2.2" fill="#111" />
<rect x="425" y="376" width="842" height="2.6" fill="#050505" />
<polygon points="456,420 486,436 456,436" fill="#ffffff"/>
<polygon points="1267,422 1267,436 1240,436" fill="#ffffff"/>
<line x1="483.8" y1="383" x2="483.8" y2="452" stroke="#111" stroke-width="1" />
<line x1="538.3" y1="383" x2="538.3" y2="452" stroke="#111" stroke-width="1" />
<line x1="646" y1="383" x2="646" y2="452" stroke="#111" stroke-width="1" />
<line x1="700.5" y1="383" x2="700.5" y2="452" stroke="#111" stroke-width="1" />
<line x1="753.5" y1="383" x2="753.5" y2="452" stroke="#111" stroke-width="1" />
<line x1="861.5" y1="383" x2="861.5" y2="452" stroke="#111" stroke-width="1" />
<line x1="969" y1="383" x2="969" y2="452" stroke="#111" stroke-width="1" />
<line x1="1077" y1="383" x2="1077" y2="452" stroke="#111" stroke-width="1" />
<line x1="1184.4" y1="383" x2="1184.4" y2="452" stroke="#111" stroke-width="1" />
<line x1="1169.5" y1="382" x2="1169.5" y2="436" stroke="#111" stroke-width="0.8" />
<line x1="1237.5" y1="383" x2="1237.5" y2="452" stroke="#111" stroke-width="0.8" />
<rect x="753.5" y="397.5" width="215" height="22.5" fill="#0a65d3" stroke="#111" stroke-width="0.8" />
<line x1="753.5" y1="396" x2="969" y2="396" stroke="#111" stroke-width="1" />
<rect x="904" y="423" width="25" height="13" fill="#ffee00" stroke="#111" stroke-width="0.6" />
<rect x="939.3" y="423" width="24.7" height="13" fill="#ffee00" stroke="#111" stroke-width="0.6" />
<rect x="864" y="444" width="6" height="7" fill="#c8a040" stroke="#111" stroke-width="0.6" />
<rect x="996" y="446.5" width="23" height="4" fill="#e6e6e6" />
<rect x="1089" y="428" width="25" height="8" fill="#ffee00" stroke="#111" stroke-width="0.6" />
<rect x="1082" y="431" width="88" height="5" fill="#dcdcdc" />
<rect x="1114" y="431" width="56" height="5" fill="#e4e4e4" />
<rect x="1180" y="431" width="46" height="5" fill="#e4e4e4" />
<rect x="1089" y="428" width="25" height="8" fill="#ffee00" stroke="#111" stroke-width="0.6" />
<rect x="1125" y="392" width="14" height="8" fill="#111" />
<polygon points="1170,436 1180,436 1245,378 1235,378" fill="#6a6a6a"/>
<line x1="1170" y1="436" x2="1235" y2="378" stroke="#111" stroke-width="1" />
<line x1="1180" y1="436" x2="1245" y2="378" stroke="#111" stroke-width="1" />
<path d="M1237 358L1174 407Q1160 412 1160 400V391Q1160 383 1170 383" fill="none" stroke="#111" stroke-width="1.6" />
<polygon points="1267,383 1281,383 1281,396 1267,408" fill="#5a5a5a"/>
<rect x="1229" y="318.5" width="78" height="2" fill="#111" />
<line x1="1229" y1="319.5" x2="1177.5" y2="370" stroke="#111" stroke-width="2" />
<line x1="1257" y1="319.5" x2="1205" y2="370" stroke="#111" stroke-width="2" />
<line x1="1256" y1="348" x2="1233" y2="370" stroke="#111" stroke-width="2" />
<rect x="1231" y="346" width="76" height="2" fill="#111" />
<line x1="1237" y1="320" x2="1237" y2="370" stroke="#8a8a8a" stroke-width="1" />
<rect x="1261.5" y="320" width="3" height="50" fill="#9a9a9a" />
<path d="M1257 320H1268Q1273 320 1273 326V340Q1273 347 1266 347H1257" fill="none" stroke="#111" stroke-width="1.5" />
<rect x="1300" y="319" width="7" height="62" fill="#555" stroke="#111" stroke-width="0.8" />
<rect x="1229" y="370" width="78" height="8.5" fill="#575757" stroke="#111" stroke-width="0.8" />
<rect x="1230" y="378" width="73" height="4" fill="#5c5c5c" />
<rect x="1267" y="382" width="36" height="4" fill="#5c5c5c" />
<rect x="1230" y="382" width="37" height="2" fill="#111" />
<rect x="419.3" y="385.5" width="22.5" height="23" fill="#555" stroke="#111" stroke-width="0.9" />
<circle cx="430.5" cy="397" r="9.5" fill="#3f3f3f" stroke="#222" stroke-width="0.8"/>
<path d="M415.6 420h4v-10h22v10h4v14h-5l-5 10h-10l-5-10h-5z" fill="url(#hatch)" stroke="#222" stroke-width="0.8"/>
<polygon points="425.6,444 435.6,444 430.6,450" fill="#777"/>
<rect x="1281" y="385.5" width="22.5" height="23" fill="#555" stroke="#111" stroke-width="0.9" />
<circle cx="1292.2" cy="397" r="9.5" fill="#3f3f3f" stroke="#222" stroke-width="0.8"/>
<path d="M1277.4 420h4v-10h22v10h4v14h-5l-5 10h-10l-5-10h-5z" fill="url(#hatch)" stroke="#222" stroke-width="0.8"/>
<polygon points="1287.4,444 1297.4,444 1292.4,450" fill="#777"/>
<polygon points="463.5,420 491,436.3 463.5,436.3" fill="#ffffff"/>
<path d="M449 401a3 3 0 0 1 3-3h9a3 3 0 0 1 3 3v32a3 3 0 0 1-3 3h-9a3 3 0 0 1-3-3z" fill="#56636a" stroke="#151515" stroke-width="0.9"/>
<line x1="449" y1="410" x2="464" y2="410" stroke="#222" stroke-width="1.2" />
<rect x="463.7" y="400.3" width="31.5" height="14.2" fill="#56636a" stroke="#111" stroke-width="0.9" />
<line x1="464" y1="404.5" x2="485" y2="404.5" stroke="#2a3236" stroke-width="0.7" />
<line x1="464" y1="410" x2="485" y2="410" stroke="#2a3236" stroke-width="0.7" />
<rect x="475" y="396" width="8" height="4.5" fill="#3a3a3a" stroke="#111" stroke-width="0.5" />
<line x1="456" y1="398" x2="456" y2="436" stroke="#111" stroke-width="1" />
<line x1="442" y1="394" x2="453" y2="399" stroke="#111" stroke-width="0.8" />
<circle cx="451.5" cy="399.5" r="1.8" fill="#ddd" stroke="#222" stroke-width="0.6"/>
<polygon points="1259,420 1259,436.3 1237,436.3" fill="#ffffff"/>
<polygon points="1271,408 1281,408 1281,418 1276,418" fill="#ffffff"/>
<path d="M1259 401a3 3 0 0 1 3-3h11a3 3 0 0 1 3 3v32a3 3 0 0 1-3 3h-11a3 3 0 0 1-3-3z" fill="#56636a" stroke="#151515" stroke-width="0.9"/>
<rect x="1227.7" y="400.2" width="31.5" height="14.4" fill="#56636a" stroke="#111" stroke-width="0.9" />
<line x1="1228" y1="405" x2="1259" y2="405" stroke="#2a3236" stroke-width="0.7" />
<line x1="1228" y1="411" x2="1259" y2="411" stroke="#222" stroke-width="1.2" />
<rect x="1238" y="396" width="9" height="4.2" fill="#56636a" stroke="#111" stroke-width="0.5" />
<line x1="1267" y1="396" x2="1267" y2="436" stroke="#111" stroke-width="0.9" />
<line x1="1276" y1="400" x2="1281" y2="394" stroke="#111" stroke-width="0.8" />
<circle cx="1321.5" cy="436.5" r="1.5" fill="#444"/>
<polygon points="488,341 493,341 493,378 481,378" fill="#787878" stroke="#111" stroke-width="0.6"/>
<rect x="493" y="366" width="9" height="6" fill="#e0e0e0" stroke="#111" stroke-width="0.6" />
<line x1="549.5" y1="357" x2="549.5" y2="370" stroke="#222" stroke-width="1.2" />
<circle cx="549.5" cy="357" r="1.5" fill="#222"/>
<line x1="571.5" y1="357" x2="571.5" y2="370" stroke="#222" stroke-width="1.2" />
<circle cx="571.5" cy="357" r="1.5" fill="#222"/>
<line x1="1125" y1="357.5" x2="1125" y2="370" stroke="#222" stroke-width="1.2" />
<circle cx="1125" cy="357.5" r="1.5" fill="#222"/>
<line x1="1170" y1="357.5" x2="1170" y2="370" stroke="#222" stroke-width="1.2" />
<circle cx="1170" cy="357.5" r="1.5" fill="#222"/>
<rect x="1118" y="366" width="7" height="4" fill="#9a9a9a" stroke="#111" stroke-width="0.6" />
<rect x="1126" y="365" width="5" height="5" fill="#8a8a8a" stroke="#111" stroke-width="0.6" />
<line x1="1126" y1="366.5" x2="1137" y2="366.5" stroke="#111" stroke-width="1" />
<rect x="755" y="279.3" width="230" height="2" fill="#111" />
<rect x="755" y="279.3" width="2" height="60" fill="#111" />
<rect x="983" y="279.3" width="2" height="55" fill="#111" />
<rect x="755" y="308" width="48" height="2" fill="#111" />
<rect x="930" y="308" width="55" height="2" fill="#111" />
<line x1="870.5" y1="281" x2="870.5" y2="300" stroke="#888" stroke-width="1.5" />
<line x1="930.5" y1="281" x2="930.5" y2="296" stroke="#333" stroke-width="1" />
<rect x="817.5" y="289.3" width="53.8" height="24" fill="#d8dcf0" />
<path d="M817.5 313V289.3H871.3V300" fill="none" stroke="#111" stroke-width="1.3" />
<path d="M884 305Q893 290 908 291L927 296" fill="none" stroke="#111" stroke-width="1" />
<path d="M884 305Q880 330 895 340" fill="none" stroke="#111" stroke-width="0.8" />
<path d="M884 305Q893 290 908 291L927 296V340H884z" fill="#e4ecf6" opacity="0.9"/>
<rect x="802.3" y="274.2" width="13.5" height="31" fill="url(#motor)" stroke="#111" stroke-width="0.8" />
<rect x="797" y="287" width="6" height="12" fill="#a8a8a8" stroke="#111" stroke-width="0.6" />
<rect x="800" y="303" width="18" height="4" fill="#555" stroke="#111" stroke-width="0.6" />
<rect x="804" y="307" width="10" height="5" fill="#777" stroke="#111" stroke-width="0.6" />
<rect x="792" y="312.3" width="26" height="22" fill="url(#motor)" stroke="#111" stroke-width="0.8" />
<rect x="818" y="313" width="32" height="21" fill="#a6a6a6" stroke="#111" stroke-width="0.8" />
<rect x="820" y="327" width="28" height="7" fill="#9a9a9a" stroke="#111" stroke-width="0.5" />
<rect x="850" y="313" width="6" height="21" fill="#333" />
<polygon points="795,325 805,325 812,334 798,334" fill="#c8c8c8" stroke="#111" stroke-width="0.6"/>
<polygon points="803,324 815,324 812,334 806,334" fill="#1e1e1e"/>
<circle cx="870" cy="323" r="15.5" fill="#555" stroke="#111" stroke-width="1"/>
<circle cx="870" cy="327" r="5" fill="#666" stroke="#111" stroke-width="0.8"/>
<polygon points="860,340 864,325 876,325 881,340" fill="#5a5a5a" stroke="#111" stroke-width="0.8"/>
<circle cx="903" cy="313" r="16.5" fill="#2a2a2a" stroke="#111" stroke-width="1"/>
<circle cx="903" cy="313" r="13" fill="#555"/>
<circle cx="902" cy="316" r="5.5" fill="#333" stroke="#111" stroke-width="0.8"/>
<rect x="895" y="321" width="17" height="19" fill="#555" stroke="#111" stroke-width="0.8" />
<line x1="903" y1="321" x2="903" y2="340" stroke="#111" stroke-width="0.8" />
<rect x="926" y="289" width="3.5" height="51" fill="#151515" />
<rect x="929" y="294.4" width="40" height="16" fill="#8fc060" stroke="#111" stroke-width="0.7" />
<rect x="959" y="310" width="9" height="17" fill="url(#motor)" stroke="#111" stroke-width="0.6" />
<rect x="938" y="299" width="10" height="6" fill="#f08010" stroke="#111" stroke-width="0.6" />
<circle cx="943" cy="314" r="9.5" fill="#f07a00" stroke="#7a3a00" stroke-width="1"/>
<rect x="930" y="326" width="28" height="14" fill="#505050" stroke="#111" stroke-width="0.7" />
<rect x="939" y="328" width="9" height="8" fill="#e8e8e8" stroke="#111" stroke-width="0.5" />
<rect x="755" y="334" width="205" height="6" fill="#3c3c3c" stroke="#111" stroke-width="0.8" />
<polygon points="775,334 779,330 793,330 797,334" fill="#444" stroke="#111" stroke-width="0.6"/>
<rect x="803" y="336" width="11" height="4" fill="#e03030" />
<rect x="816" y="336.3" width="93" height="3.6" fill="#f0a030" stroke="#111" stroke-width="0.5" />
<rect x="909" y="336" width="13" height="4" fill="#e03030" />
<rect x="755" y="340" width="205" height="28" fill="#575757" stroke="#111" stroke-width="1" />
<rect x="741" y="341" width="14" height="12" fill="#3a3a3a" stroke="#111" stroke-width="0.8" />
<line x1="796.7" y1="340" x2="796.7" y2="368" stroke="#111" stroke-width="1" />
<line x1="943.6" y1="340" x2="943.6" y2="368" stroke="#111" stroke-width="1" />
<circle cx="803" cy="354" r="3" fill="#d8f8ff" stroke="#222" stroke-width="0.8"/>
<circle cx="813" cy="354" r="3" fill="#d8f8ff" stroke="#222" stroke-width="0.8"/>
<circle cx="927" cy="354" r="3" fill="#d8f8ff" stroke="#222" stroke-width="0.8"/>
<circle cx="937" cy="354" r="3" fill="#d8f8ff" stroke="#222" stroke-width="0.8"/>
<circle cx="774.3" cy="356.6" r="9" fill="#4a4a4a" stroke="#222" stroke-width="1"/>
<circle cx="774.3" cy="356.6" r="5.5" fill="#555" stroke="#333" stroke-width="0.6"/>
<path d="M764 352A11.5 11.5 0 0 0 783 368" fill="none" stroke="#2ab0c0" stroke-width="2" />
<path d="M767 351A8.5 8.5 0 0 0 781 365" fill="none" stroke="#2ab0c0" stroke-width="1.2" />
<line x1="903" y1="347" x2="903" y2="365" stroke="#222" stroke-width="1" />
<circle cx="903" cy="362" r="3" fill="#222"/>
<line x1="895" y1="362" x2="911" y2="362" stroke="#222" stroke-width="0.8" />
<path d="M955 355A9 9 0 0 1 960 345" fill="none" stroke="#222" stroke-width="1" />
<rect x="960" y="334.8" width="13.5" height="47" fill="#a8a8a8" stroke="#111" stroke-width="0.6" />
<rect x="960" y="382" width="13" height="8" fill="#d0d0d0" />
<rect x="973.5" y="333.4" width="107.5" height="96" fill="#a6a6a6" />
<rect x="973.5" y="332.5" width="107.5" height="2.2" fill="#111" />
<line x1="973.5" y1="333" x2="973.5" y2="429.4" stroke="#111" stroke-width="1.6" />
<line x1="1000.3" y1="333" x2="1000.3" y2="429.4" stroke="#111" stroke-width="1.3" />
<line x1="1027" y1="333" x2="1027" y2="429.4" stroke="#111" stroke-width="2" />
<line x1="1054.4" y1="333" x2="1054.4" y2="429.4" stroke="#111" stroke-width="1.3" />
<line x1="1080.8" y1="333" x2="1080.8" y2="429.4" stroke="#111" stroke-width="1.6" />
<line x1="1076.8" y1="382" x2="1076.8" y2="429.4" stroke="#111" stroke-width="1.2" />
<line x1="973.5" y1="382.4" x2="1081" y2="382.4" stroke="#111" stroke-width="2" />
<line x1="973.5" y1="410.6" x2="1081" y2="410.6" stroke="#111" stroke-width="1.6" />
<rect x="973.5" y="429.4" width="107.5" height="7" fill="#6a6a6a" stroke="#111" stroke-width="0.8" />
<rect x="1030" y="363" width="12" height="8" fill="none" stroke="#333" stroke-width="0.8" />
<rect x="1024" y="329" width="10" height="4.5" fill="#999" stroke="#111" stroke-width="0.5" />
<rect x="1081" y="355" width="3" height="17" fill="#e0e0e8" stroke="#111" stroke-width="0.5" />
<rect x="998.5" y="376" width="3" height="7" fill="#222" />
<rect x="1052.5" y="376" width="3" height="7" fill="#222" /></svg>
<svg class="a" style="left:80px;top:890px" width="100" height="90" viewBox="80 890 100 90">
<line x1="100.5" y1="960" x2="100.5" y2="922" stroke="#78b8e0" stroke-width="5"/>
<line x1="100.5" y1="960" x2="100.5" y2="922" stroke="#d4eefa" stroke-width="2.2"/>
<polygon points="100.5,909.5 96,926 105,926" fill="#9cd0f0" stroke="#6aa8d8" stroke-width="0.8"/>
<text x="96.5" y="906" font-family="Liberation Serif" font-size="11.5" fill="#7a9ad8">Z</text>
<line x1="106" y1="965.3" x2="142" y2="965.3" stroke="#80d080" stroke-width="5"/>
<line x1="106" y1="965.3" x2="142" y2="965.3" stroke="#d8f8d8" stroke-width="2.2"/>
<polygon points="156,965.3 140,960.8 140,969.8" fill="#a8e8a8" stroke="#70c070" stroke-width="0.8"/>
<text x="159.5" y="969.5" font-family="Liberation Serif" font-size="11.5" fill="#80c080">Y</text>
<circle cx="100.5" cy="965" r="6" fill="#f4e070" stroke="#e8c040" stroke-width="1"/>
<circle cx="100.5" cy="965" r="3.8" fill="#c04a30"/>
</svg>
<div id="tb" class="a" style="left:660px;top:143px;width:588px;height:27px;background:#efefef;border:1px solid #6a6a6a"></div>
<div class="a" style="left:661px;top:144px;width:15px;height:25px;background:#dcdcdc"></div>
<svg class="a" style="left:663px;top:148px" width="12" height="5" viewBox="0 0 12 5"><rect x="0.0" y="0.0" width="1.8" height="1.8" fill="#555"/><rect x="0.0" y="2.5" width="1.8" height="1.8" fill="#555"/><rect x="2.8" y="0.0" width="1.8" height="1.8" fill="#555"/><rect x="2.8" y="2.5" width="1.8" height="1.8" fill="#555"/><rect x="5.6" y="0.0" width="1.8" height="1.8" fill="#555"/><rect x="5.6" y="2.5" width="1.8" height="1.8" fill="#555"/><rect x="8.399999999999999" y="0.0" width="1.8" height="1.8" fill="#555"/><rect x="8.399999999999999" y="2.5" width="1.8" height="1.8" fill="#555"/></svg>
<div class="a" style="left:676px;top:144px;width:1px;height:25px;background:#6a6a6a"></div>
<div class="a" style="left:732px;top:144px;width:1px;height:25px;background:#6a6a6a"></div>
<div class="a" style="left:857px;top:144px;width:1px;height:25px;background:#6a6a6a"></div>
<div class="a" style="left:933px;top:144px;width:1px;height:25px;background:#6a6a6a"></div>
<div class="a" style="left:1032px;top:144px;width:1px;height:25px;background:#6a6a6a"></div>
<div class="a" style="left:1142px;top:144px;width:1px;height:25px;background:#6a6a6a"></div>
<div class="a" style="left:1190px;top:144px;width:1px;height:25px;background:#6a6a6a"></div>
<div class="a" style="left:858px;top:144px;width:26px;height:25px;background:#4b4b4b"></div>
<div class="a" style="left:1033px;top:144px;width:26px;height:25px;background:#4b4b4b"></div>
<div class="a" style="left:1143px;top:144px;width:47px;height:25px;background:#4b4b4b"></div>
<svg class="a" style="left:683px;top:148px;overflow:visible" width="17" height="17" viewBox="0 0 17 17"><path d="M2 2h6.5v8h6v5H2z" stroke="#222" fill="none" stroke-width="1.3"/><circle cx="2" cy="2" r="1.5" fill="#efefef" stroke="#222" stroke-width="1"/><circle cx="8.5" cy="2" r="1.5" fill="#efefef" stroke="#222" stroke-width="1"/><circle cx="8.5" cy="10" r="1.5" fill="#efefef" stroke="#222" stroke-width="1"/><circle cx="14.5" cy="10" r="1.5" fill="#efefef" stroke="#222" stroke-width="1"/><circle cx="14.5" cy="15" r="1.5" fill="#efefef" stroke="#222" stroke-width="1"/><circle cx="2" cy="15" r="1.5" fill="#efefef" stroke="#222" stroke-width="1"/></svg>
<svg class="a" style="left:710px;top:148px;overflow:visible" width="17" height="17" viewBox="0 0 17 17"><path d="M1.5 4.5L4 2.5v12.5H1.5z" fill="#222"/><path d="M4 2.5v9.5h9v-2.5h2.5v3L13 15H1.5" stroke="#222" fill="none" stroke-width="1.3"/><path d="M4 9l3 3H4z" fill="#222"/><circle cx="12.5" cy="3.8" r="3" stroke="#222" fill="none" stroke-width="1.3"/><circle cx="12.5" cy="3.8" r="1" fill="#222"/></svg>
<svg class="a" style="left:739px;top:148px;overflow:visible" width="17" height="17" viewBox="0 0 17 17"><circle cx="6" cy="6" r="5" stroke="#222" fill="none" stroke-width="1.3"/><path d="M9.5 9.5l5 5" stroke="#222" stroke-width="2.2"/><path d="M7 1.5v9M14 1.5v8M7 1.5h7M7 5.5h7" stroke="#222" stroke-width="1" stroke-dasharray="1 1.2"/></svg>
<svg class="a" style="left:766px;top:153px" width="10" height="5" viewBox="0 0 10 5"><path d="M0 0h10L5 5z" fill="#222"/></svg>
<svg class="a" style="left:787px;top:147px;overflow:visible" width="17" height="17" viewBox="0 0 17 17"><path d="M1 16l4-6h11l-4 6z" fill="#222"/><path d="M8.5 1L4.5 5.5H7V13h3V5.5h2.5z" fill="#efefef" stroke="#222" stroke-width="1.3"/></svg>
<svg class="a" style="left:814px;top:147px;overflow:visible" width="17" height="17" viewBox="0 0 17 17"><path d="M8 10V1M8 1l-1.8 3M8 1l1.8 3M8 10h8M16 10l-3-1.8M16 10l-3 1.8M8 10L1 16M1 16l1-3M1 16l3-1" stroke="#222" fill="none" stroke-width="1.3"/><rect x="6" y="8" width="4" height="4" fill="#efefef" stroke="#222" stroke-width="1.3"/></svg>
<svg class="a" style="left:840px;top:153px" width="10" height="5" viewBox="0 0 10 5"><path d="M0 0h10L5 5z" fill="#222"/></svg>
<svg class="a" style="left:862px;top:147px;overflow:visible" width="17" height="17" viewBox="0 0 17 17"><path d="M8.5 1L16 4.5v8.5L8.5 16.5 1 13V4.5z" fill="#f4f4f4"/><path d="M1 4.5l7.5 3.5L16 4.5M8.5 8v8.5" stroke="#4b4b4b" stroke-width="1.2" fill="none"/></svg>
<svg class="a" style="left:890px;top:147px;overflow:visible" width="17" height="17" viewBox="0 0 17 17"><path d="M8.5 1L16 4.5v8.5L8.5 16.5 1 13V4.5z" stroke="#222" fill="none" stroke-width="1.3"/><path d="M1 4.5l7.5 3.5L16 4.5M8.5 8v8.5M8.5 1v8L1 13M8.5 9L16 13" stroke="#222" stroke-width="1" fill="none"/></svg>
<svg class="a" style="left:918px;top:153px" width="10" height="5" viewBox="0 0 10 5"><path d="M0 0h10L5 5z" fill="#222"/></svg>
<svg class="a" style="left:940px;top:147px;overflow:visible" width="17" height="17" viewBox="0 0 17 17"><path d="M1 9c2.5-3.5 5-5 7.5-5s5 1.5 7.5 5c-2.5 3.5-5 5-7.5 5s-5-1.5-7.5-5z" stroke="#222" fill="none" stroke-width="1.3"/><circle cx="8.5" cy="9" r="2.6" fill="#222"/><path d="M1 1l15 15" stroke="#222" stroke-width="1.3"/></svg>
<svg class="a" style="left:968px;top:153px" width="10" height="5" viewBox="0 0 10 5"><path d="M0 0h10L5 5z" fill="#222"/></svg>
<svg class="a" style="left:988px;top:147px;overflow:visible" width="17" height="17" viewBox="0 0 17 17"><path d="M1 3h16v11H1z" fill="#222"/><path d="M2.5 8.5c2-3 4-4 6.5-4s4.5 1 6.5 4c-2 3-4 4-6.5 4s-4.5-1-6.5-4z" stroke="#efefef" fill="none" stroke-width="1.3"/><circle cx="9" cy="8.5" r="2" stroke="#efefef" fill="none" stroke-width="1.1"/><path d="M1 1l2 2M15 14l2 2" stroke="#222" stroke-width="1.2"/></svg>
<svg class="a" style="left:1016px;top:153px" width="10" height="5" viewBox="0 0 10 5"><path d="M0 0h10L5 5z" fill="#222"/></svg>
<svg class="a" style="left:1038px;top:147px;overflow:visible" width="17" height="17" viewBox="0 0 17 17"><path d="M3 13L14 4" stroke="#f4f4f4" fill="none" stroke-width="1.3"/><circle cx="3" cy="13" r="2" fill="#4b4b4b" stroke="#f4f4f4" stroke-width="1.2"/><circle cx="14" cy="4" r="2" fill="#4b4b4b" stroke="#f4f4f4" stroke-width="1.2"/><path d="M4 3.5l1.8-1.8 1.8 1.8-1.8 1.8zM11 13.5l1.8-1.8 1.8 1.8-1.8 1.8z" stroke="#f4f4f4" stroke-width="1.1" fill="none"/></svg>
<svg class="a" style="left:1065px;top:147px;overflow:visible" width="17" height="17" viewBox="0 0 17 17"><path d="M4 5h10v11H4z" stroke="#222" fill="none" stroke-width="1.3"/><path d="M6 5V1.5M9 5V1.5M12 5V1.5M4 3h10" stroke="#222" stroke-width="1.3"/><path d="M1.5 8v7M1 9h2M1 12h2M1 15h2" stroke="#222" stroke-width="1.1"/></svg>
<svg class="a" style="left:1093px;top:147px;overflow:visible" width="17" height="17" viewBox="0 0 17 17"><path d="M1 1.5h9l5 5v9H6l-5-5z" stroke="#222" fill="none" stroke-width="1.3"/><path d="M1 1.5h9v9H1z" fill="#222"/><path d="M2.5 3l6.5 6.5" stroke="#efefef" stroke-width="1.2"/><path d="M6 10.5h9v5H6z" fill="#555"/><path d="M10 1.5l5 5" stroke="#222" fill="none" stroke-width="1.3"/></svg>
<svg class="a" style="left:1119px;top:147px;overflow:visible" width="17" height="17" viewBox="0 0 17 17"><path d="M1 16V6l5-5 10 9-5 6z" fill="#222"/><path d="M3.5 13V7.5L6.5 4.5l7 5.5-3 3.5z" fill="#efefef"/><path d="M5 11V8l1.5-1.5 4.5 3.5-1.5 1.5z" fill="#222"/><path d="M6 1l9 8" stroke="#222" stroke-width="1" stroke-dasharray="1.3 1"/></svg>
<svg class="a" style="left:1147px;top:147px;overflow:visible" width="17" height="17" viewBox="0 0 17 17"><path d="M1 1h16L11 8.5V16H7V8.5z" fill="#f4f4f4"/></svg>
<svg class="a" style="left:1175px;top:153px" width="10" height="5" viewBox="0 0 10 5"><path d="M0 0h10L5 5z" fill="#f4f4f4"/></svg>
<svg class="a" style="left:1197px;top:147px;overflow:visible" width="17" height="17" viewBox="0 0 17 17"><path d="M1 1.5h16" stroke="#222" stroke-width="2"/><path d="M2 2v7M12 2v14M15.5 2v14" stroke="#222" fill="none" stroke-width="1.3"/><path d="M12 3l3.5 3M15.5 3L12 6M12 7l3.5 3M15.5 7L12 10M12 11l3.5 3M15.5 11L12 14" stroke="#222" stroke-width="1"/><path d="M1 10h7v6H1zM1 13h7M4.5 10v6" stroke="#222" fill="none" stroke-width="1.3"/></svg>
<svg class="a" style="left:1225px;top:147px;overflow:visible" width="17" height="17" viewBox="0 0 17 17"><path d="M2 16l1-3 8-8 2 2-8 8z" stroke="#d0d0d0" fill="none" stroke-width="1.3"/><path d="M10 3l2-2 4 4-2 2z" fill="#d8d8d8"/></svg>
</div>
</body></html>
